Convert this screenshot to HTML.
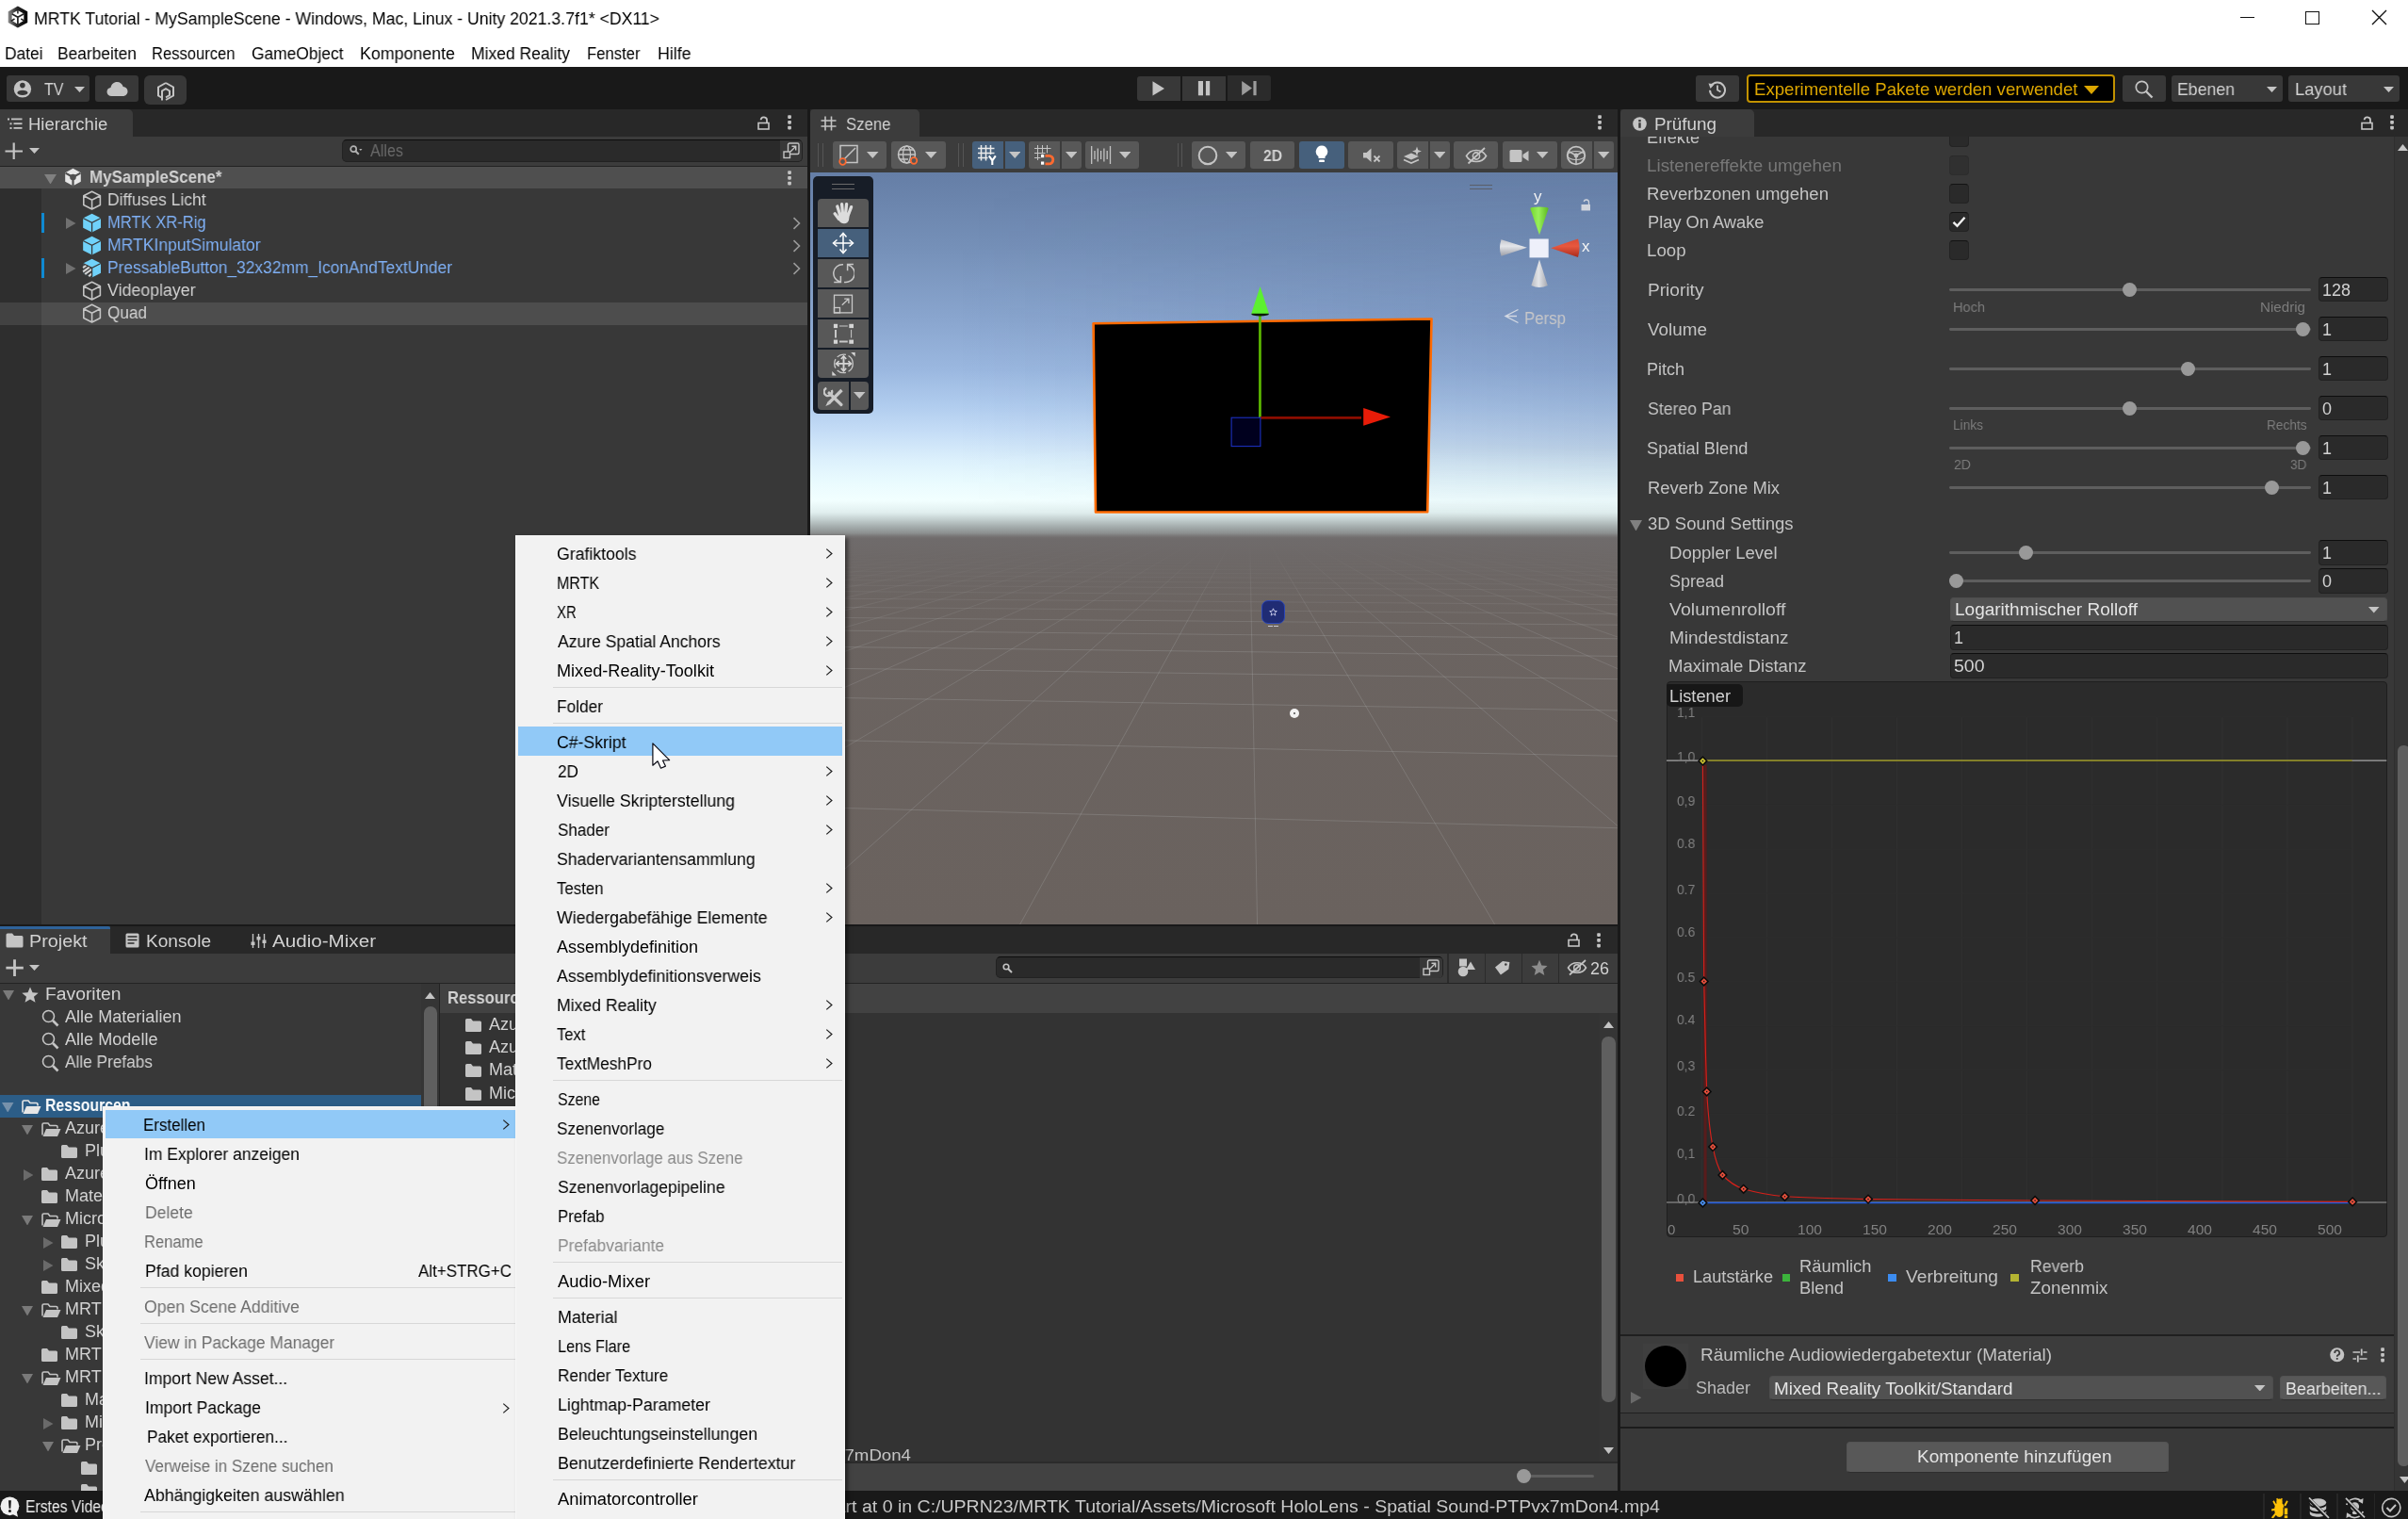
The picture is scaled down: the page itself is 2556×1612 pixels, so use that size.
<!DOCTYPE html>
<html lang="de"><head><meta charset="utf-8"><title>Unity</title><style>
html,body{margin:0;padding:0;}
body{width:2556px;height:1612px;overflow:hidden;background:#191919;position:relative;font-family:"Liberation Sans",sans-serif;}
#root{position:absolute;left:0;top:0;width:2556px;height:1612px;overflow:hidden;}
.b{position:absolute;display:block;}
.t{position:absolute;white-space:nowrap;line-height:1;transform-origin:0 0;will-change:transform;}
</style></head>
<body>
<div class="b" style="left:0px;top:0px;width:2556px;height:70.6px;background:#ffffff;"></div>
<svg class="b" style="left:7px;top:5px;" width="24" height="26" viewBox="0 0 24 26"><defs><linearGradient id="ug" x1="0" y1="0" x2="1" y2="0"><stop offset="0" stop-color="#8a8a8a"/><stop offset="0.45" stop-color="#2a2a2a"/><stop offset="1" stop-color="#000"/></linearGradient></defs><path d="M11.900 1.600 L22.200 7.300 V18.900 L11.900 24.400 L1.700 18.900 V7.300Z" fill="url(#ug)"/><path d="M11.900 6 L18.300 9.600 V16.800 L11.900 20.800 L5.600 16.800 V9.600Z" fill="#fff"/><path d="M11.900 13.300 V21 M11.900 13.300 L5.600 9.700 M11.900 13.300 L18.300 9.700" stroke="#222" stroke-width="1.700" fill="none"/><path d="M11.900 5 V9.500 M4.600 17.300 L8.500 15 M19.200 17.300 L15.300 15" stroke="#222" stroke-width="1.500"/></svg>
<div class="t" style="left:36.0px;top:10px;font-size:18px;line-height:20px;color:#000;transform:scaleX(0.9813);">MRTK Tutorial - MySampleScene - Windows, Mac, Linux - Unity 2021.3.7f1* &lt;DX11&gt;</div>
<div class="b" style="left:2378px;top:18px;width:15px;height:1.4px;background:#111;"></div>
<div class="b" style="left:2446.5px;top:11.5px;width:15px;height:14.5px;background:transparent;border:1.4px solid #111;box-sizing:border-box;"></div>
<svg class="b" style="left:2517px;top:10px;" width="17" height="17" viewBox="0 0 17 17"><path d="M1 1 L16 16 M16 1 L1 16" stroke="#111" stroke-width="1.4"/></svg>
<div class="t" style="left:4.5px;top:47px;font-size:18px;line-height:20px;color:#000;transform:scaleX(0.9638);">Datei</div>
<div class="t" style="left:60.5px;top:47px;font-size:18px;line-height:20px;color:#000;transform:scaleX(0.9648);">Bearbeiten</div>
<div class="t" style="left:160.5px;top:47px;font-size:18px;line-height:20px;color:#000;transform:scaleX(0.9214);">Ressourcen</div>
<div class="t" style="left:266.5px;top:47px;font-size:18px;line-height:20px;color:#000;transform:scaleX(0.9650);">GameObject</div>
<div class="t" style="left:381.5px;top:47px;font-size:18px;line-height:20px;color:#000;transform:scaleX(0.9894);">Komponente</div>
<div class="t" style="left:500.0px;top:47px;font-size:18px;line-height:20px;color:#000;transform:scaleX(0.9719);">Mixed Reality</div>
<div class="t" style="left:622.5px;top:47px;font-size:18px;line-height:20px;color:#000;transform:scaleX(0.9259);">Fenster</div>
<div class="t" style="left:697.5px;top:47px;font-size:18px;line-height:20px;color:#000;transform:scaleX(0.9858);">Hilfe</div>
<div class="b" style="left:0px;top:70.6px;width:2556px;height:44.4px;background:#191919;"></div>
<div class="b" style="left:6.9px;top:80px;width:88.1px;height:28px;background:#383838;border-radius:3px;"></div>
<svg class="b" style="left:14px;top:84.5px;" width="20" height="20" viewBox="0 0 20 20"><circle cx="9.900" cy="9.400" r="9.200" fill="#c4c4c4"/><circle cx="9.900" cy="5.600" r="2.800" fill="#383838"/><ellipse cx="9.900" cy="13.400" rx="5.500" ry="2.700" fill="#383838"/></svg>
<div class="t" style="left:46.5px;top:84px;font-size:19px;line-height:21px;color:#d2d2d2;transform:scaleX(0.8443);">TV</div>
<svg class="b" style="left:79px;top:92px;" width="11" height="6" viewBox="0 0 11 6"><path d="M0 0 H11 L5.5 6Z" fill="#c4c4c4"/></svg>
<div class="b" style="left:101px;top:80px;width:46px;height:28px;background:#383838;border-radius:3px;"></div>
<svg class="b" style="left:113px;top:86px;" width="23" height="17" viewBox="0 0 23 17"><path d="M5.5 16 C2.5 16 0.5 14 0.5 11.5 C0.5 9 2.3 7.3 4.5 7.1 C5 3.5 7.8 1 11.3 1 C14.4 1 16.9 3 17.7 6 C20.5 6.2 22.5 8.3 22.5 11 C22.5 13.800 20.300 16 17.5 16 Z" fill="#c4c4c4"/></svg>
<div class="b" style="left:152.8px;top:80px;width:45.2px;height:31px;background:#383838;border-radius:6px;"></div>
<svg class="b" style="left:165.5px;top:86.5px;" width="20" height="20" viewBox="0 0 20 20"><path d="M10 1 L18 5.5 V14.5 L10 19" fill="none" stroke="#c4c4c4" stroke-width="2"/><path d="M10 1 L2 5.5 V14.5 L5.5 16.5" fill="none" stroke="#c4c4c4" stroke-width="2"/><path d="M6 19.5 V9.5 L10 7.2 L14 9.5 V14 L10 16.3" fill="none" stroke="#c4c4c4" stroke-width="2"/></svg>
<div class="b" style="left:1207px;top:81px;width:46px;height:26px;background:#383838;border-radius:3px 0 0 3px;"></div>
<div class="b" style="left:1254.9px;top:81px;width:46.2px;height:26px;background:#383838;"></div>
<div class="b" style="left:1302.8px;top:80.4px;width:46.6px;height:27.1px;background:#2b2b2b;border-radius:0 3px 3px 0;"></div>
<svg class="b" style="left:1223.3px;top:85.6px;" width="14" height="16" viewBox="0 0 14 16"><path d="M0.5 0.200 L13 7.900 L0.5 15.6Z" fill="#c4c4c4"/></svg>
<svg class="b" style="left:1271px;top:85.9px;" width="14" height="16" viewBox="0 0 14 16"><rect x="0.9" y="0" width="5.1" height="15.3" fill="#c4c4c4"/><rect x="8.9" y="0" width="4.300" height="15.3" fill="#c4c4c4"/></svg>
<svg class="b" style="left:1318px;top:86.4px;" width="17" height="16" viewBox="0 0 17 16"><path d="M0.2 0 L11 7.6 L0.2 15.2Z" fill="#9c9c9c"/><rect x="12.400" y="0" width="3.200" height="15.2" fill="#9c9c9c"/></svg>
<div class="b" style="left:1800px;top:80px;width:46px;height:28px;background:#383838;border-radius:3px;"></div>
<svg class="b" style="left:1813px;top:84.5px;" width="20" height="20" viewBox="0 0 20 20"><path d="M3.3 6.2 A8 8 0 1 1 2 10.800" fill="none" stroke="#c4c4c4" stroke-width="2"/><path d="M0.5 3.5 L6.8 4.2 L2.6 9Z" fill="#c4c4c4"/><path d="M10 5.5 V10.5 L13.5 12.5" fill="none" stroke="#c4c4c4" stroke-width="1.8"/></svg>
<div class="b" style="left:1854.3px;top:79.2px;width:390.3px;height:29.7px;background:#000;border:2px solid #c29200;border-radius:4px;box-sizing:border-box;"></div>
<div class="t" style="left:1862.0px;top:84px;font-size:18.5px;line-height:21px;color:#dca600;transform:scaleX(1.0061);">Experimentelle Pakete werden verwendet</div>
<svg class="b" style="left:2212px;top:91px;" width="16" height="9" viewBox="0 0 16 9"><path d="M0 0 H16 L8 9Z" fill="#dca600"/></svg>
<div class="b" style="left:2253px;top:80px;width:45.6px;height:28px;background:#383838;border-radius:3px;"></div>
<svg class="b" style="left:2266px;top:85px;" width="20" height="20" viewBox="0 0 20 20"><circle cx="7.5" cy="7.5" r="6.2" fill="none" stroke="#c4c4c4" stroke-width="1.700"/><path d="M12 12 L18.5 18.5" stroke="#c4c4c4" stroke-width="2.4"/></svg>
<div class="b" style="left:2305px;top:80px;width:117.7px;height:28px;background:#383838;border-radius:3px;"></div>
<div class="t" style="left:2310.5px;top:84px;font-size:18.5px;line-height:21px;color:#d2d2d2;transform:scaleX(0.9563);">Ebenen</div>
<svg class="b" style="left:2406px;top:92px;" width="11" height="6" viewBox="0 0 11 6"><path d="M0 0 H11 L5.5 6Z" fill="#c4c4c4"/></svg>
<div class="b" style="left:2428.8px;top:80px;width:118.2px;height:28px;background:#383838;border-radius:3px;"></div>
<div class="t" style="left:2435.5px;top:84px;font-size:18.5px;line-height:21px;color:#d2d2d2;transform:scaleX(0.9902);">Layout</div>
<svg class="b" style="left:2530px;top:92px;" width="11" height="6" viewBox="0 0 11 6"><path d="M0 0 H11 L5.5 6Z" fill="#c4c4c4"/></svg>
<div class="b" style="left:0px;top:116px;width:857px;height:865px;background:#383838;"></div>
<div class="b" style="left:0px;top:116px;width:857px;height:29px;background:#282828;"></div>
<div class="b" style="left:0px;top:116px;width:140.5px;height:29px;background:#3c3c3c;border-radius:0 5px 0 0;"></div>
<svg class="b" style="left:7.5px;top:124.5px;" width="16" height="13" viewBox="0 0 16 13"><rect x="0" y="0.5" width="2" height="2" fill="#c4c4c4"/><rect x="4" y="0.500" width="11.5" height="1.800" fill="#c4c4c4"/><rect x="2.5" y="5.300" width="2" height="2" fill="#c4c4c4"/><rect x="6.5" y="5.300" width="9" height="1.800" fill="#c4c4c4"/><rect x="2.5" y="10" width="2" height="2" fill="#c4c4c4"/><rect x="6.5" y="10" width="9" height="1.800" fill="#c4c4c4"/></svg>
<div class="t" style="left:30.0px;top:122px;font-size:18px;line-height:20px;color:#d2d2d2;transform:scaleX(1.0276);">Hierarchie</div>
<svg class="b" style="left:804px;top:122.5px;" width="14" height="15" viewBox="0 0 14 15"><rect x="1" y="7.5" width="11" height="6.5" fill="none" stroke="#c4c4c4" stroke-width="1.600"/><path d="M10 7 V4.800 A3.2 3.2 0 0 0 3.6 4.300" fill="none" stroke="#c4c4c4" stroke-width="1.800"/></svg>
<svg class="b" style="left:835.5px;top:122.1px;" width="4" height="16" viewBox="0 0 4 16"><rect x="0.2" y="0.2" width="3.700" height="3.700" rx="0.800" fill="#c4c4c4"/><rect x="0.2" y="5.95" width="3.700" height="3.700" rx="0.800" fill="#c4c4c4"/><rect x="0.2" y="11.7" width="3.700" height="3.700" rx="0.800" fill="#c4c4c4"/></svg>
<div class="b" style="left:0px;top:145px;width:857px;height:32px;background:#3c3c3c;"></div>
<div class="b" style="left:0px;top:175.8px;width:857px;height:1.1px;background:#232323;"></div>
<svg class="b" style="left:5px;top:150.5px;" width="20" height="19" viewBox="0 0 20 19"><path d="M9.700 0.500 V18 M0.500 9.500 H19" stroke="#c4c4c4" stroke-width="2.200"/></svg>
<svg class="b" style="left:30.6px;top:157px;" width="11" height="6.5" viewBox="0 0 11 6.5"><path d="M0 0 H11 L5.5 6Z" fill="#c4c4c4"/></svg>
<div class="b" style="left:363.2px;top:148.2px;width:488.8px;height:23.4px;background:#2a2a2a;border:1px solid #222;border-top:1.5px solid #0d0d0d;border-radius:5px;box-sizing:border-box;"></div>
<svg class="b" style="left:371px;top:154px;" width="14" height="12" viewBox="0 0 14 12"><circle cx="4.200" cy="4.200" r="3" fill="none" stroke="#b0b0b0" stroke-width="1.700"/><path d="M6.300 6.300 L9.800 9.800" stroke="#b0b0b0" stroke-width="2"/><path d="M10.200 4 H13.500 L11.850 6Z" fill="#b0b0b0"/></svg>
<div class="t" style="left:393.0px;top:150px;font-size:18px;line-height:20px;color:#6a6a6a;transform:scaleX(0.8971);">Alles</div>
<div class="b" style="left:828px;top:149px;width:23px;height:21.5px;background:#383838;border-radius:0 4px 4px 0;"></div>
<svg class="b" style="left:830.5px;top:151px;" width="18" height="18" viewBox="0 0 18 18"><rect x="5.500" y="1" width="11.500" height="11.500" rx="1.500" fill="none" stroke="#c4c4c4" stroke-width="1.400"/><rect x="1" y="10" width="6.500" height="6.500" fill="#383838" stroke="#c4c4c4" stroke-width="1.400"/><path d="M8 10 L13.500 4.500 M9.500 4.300 H13.700 V8.500" fill="none" stroke="#c4c4c4" stroke-width="1.400"/></svg>
<div class="b" style="left:0px;top:177px;width:857px;height:23px;background:#4f4f4f;"></div>
<svg class="b" style="left:47px;top:184.5px;" width="13" height="10.5" viewBox="0 0 13 10.5"><path d="M0 0 H13 L6.5 10.5Z" fill="#808080"/></svg>
<svg class="b" style="left:68px;top:178px;" width="19" height="20" viewBox="0 0 19 20"><path d="M9.500 0.800 L17.800 5.300 V14.700 L9.500 19.200 L1.200 14.700 V5.300Z" fill="#e6e6e6"/><path d="M9.500 10 V19 M9.500 10 L1.500 5.600 M9.500 10 L17.500 5.600" stroke="#4f4f4f" stroke-width="2.200"/><circle cx="9.500" cy="10" r="3.300" fill="#4f4f4f"/></svg>
<div class="t" style="left:94.5px;top:178px;font-size:18px;line-height:20px;color:#d2d2d2;transform:scaleX(0.9425);font-weight:bold;">MySampleScene*</div>
<svg class="b" style="left:836px;top:180.6px;" width="4" height="16" viewBox="0 0 4 16"><rect x="0.2" y="0.2" width="3.700" height="3.700" rx="0.800" fill="#c4c4c4"/><rect x="0.2" y="5.95" width="3.700" height="3.700" rx="0.800" fill="#c4c4c4"/><rect x="0.2" y="11.7" width="3.700" height="3.700" rx="0.800" fill="#c4c4c4"/></svg>
<div class="b" style="left:0px;top:200px;width:43.5px;height:781px;background:#2e2e2e;"></div>
<div class="b" style="left:0px;top:320.5px;width:857px;height:24px;background:#4d4d4d;"></div>
<div class="b" style="left:0px;top:320.5px;width:43.5px;height:24px;background:#424242;"></div>
<svg class="b" style="left:86.9px;top:201.9px;" width="21.2" height="21.2" viewBox="0 0 20 20"><path d="M10 1.2 L18.3 5.400 V14.6 L10 18.8 L1.700 14.6 V5.400 Z M1.700 5.400 L10 9.6 L18.3 5.400 M10 9.6 V18.8" fill="none" stroke="#c4c4c4" stroke-width="1.500" stroke-linejoin="round"/></svg>
<div class="t" style="left:113.6px;top:202px;font-size:18px;line-height:20px;color:#d2d2d2;transform:scaleX(0.9701);">Diffuses Licht</div>
<svg class="b" style="left:86.9px;top:225.9px;" width="21.2" height="21.2" viewBox="0 0 20 20"><path d="M10 0.700 L18.900 5.200 V14.800 L10 19.400 L1.100 14.800 V5.200Z" fill="#70d2fa"/><path d="M1.100 5.200 L10 9.700 L18.900 5.200 M10 9.700 V19.400" fill="none" stroke="#383838" stroke-width="1.200"/></svg>
<div class="t" style="left:113.6px;top:226px;font-size:18px;line-height:20px;color:#7fb0f5;transform:scaleX(0.9192);">MRTK XR-Rig</div>
<svg class="b" style="left:70px;top:230.5px;" width="10.5" height="12" viewBox="0 0 10.5 12"><path d="M0 0 V12 L10.5 6Z" fill="#707070"/></svg>
<div class="b" style="left:44.1px;top:226.2px;width:3px;height:21px;background:#0f8ad2;"></div>
<svg class="b" style="left:840.5px;top:229.5px;" width="9" height="14" viewBox="0 0 9 14"><path d="M1.500 1.200 L7.500 7 L1.500 12.800" fill="none" stroke="#9a9a9a" stroke-width="1.600"/></svg>
<svg class="b" style="left:86.9px;top:249.9px;" width="21.2" height="21.2" viewBox="0 0 20 20"><path d="M10 0.700 L18.900 5.200 V14.800 L10 19.400 L1.100 14.800 V5.200Z" fill="#70d2fa"/><path d="M1.100 5.200 L10 9.700 L18.900 5.200 M10 9.700 V19.400" fill="none" stroke="#383838" stroke-width="1.200"/></svg>
<div class="t" style="left:113.6px;top:250px;font-size:18px;line-height:20px;color:#7fb0f5;transform:scaleX(0.9746);">MRTKInputSimulator</div>
<svg class="b" style="left:840.5px;top:253.5px;" width="9" height="14" viewBox="0 0 9 14"><path d="M1.500 1.200 L7.500 7 L1.500 12.800" fill="none" stroke="#9a9a9a" stroke-width="1.600"/></svg>
<svg class="b" style="left:86.9px;top:273.9px;" width="21.2" height="21.2" viewBox="0 0 20 20"><path d="M10 0.700 L18.900 5.200 V14.800 L10 19.400 L1.100 14.800 V5.200Z" fill="#70d2fa"/><path d="M1.100 5.200 L10 9.700 V19.400 L1.100 14.800Z" fill="#383838"/><path d="M1.100 9.500 L5 6.500 M1.100 13.500 L8.500 8.200 M3 16 L10 11 M6.800 18 L10 15.500" stroke="#d2d2d2" stroke-width="2"/><path d="M1.100 5.200 L10 9.700 L18.900 5.200 M10 9.700 V19.400" fill="none" stroke="#383838" stroke-width="1.200"/><path d="M0 0 H10 V5 L0 0Z" fill="none"/></svg>
<div class="t" style="left:113.6px;top:274px;font-size:18px;line-height:20px;color:#7fb0f5;transform:scaleX(0.9651);">PressableButton_32x32mm_IconAndTextUnder</div>
<svg class="b" style="left:70px;top:278.5px;" width="10.5" height="12" viewBox="0 0 10.5 12"><path d="M0 0 V12 L10.5 6Z" fill="#707070"/></svg>
<div class="b" style="left:44.1px;top:274.2px;width:3px;height:21px;background:#0f8ad2;"></div>
<svg class="b" style="left:840.5px;top:277.5px;" width="9" height="14" viewBox="0 0 9 14"><path d="M1.500 1.200 L7.500 7 L1.500 12.800" fill="none" stroke="#9a9a9a" stroke-width="1.600"/></svg>
<svg class="b" style="left:86.9px;top:297.9px;" width="21.2" height="21.2" viewBox="0 0 20 20"><path d="M10 1.2 L18.3 5.400 V14.6 L10 18.8 L1.700 14.6 V5.400 Z M1.700 5.400 L10 9.6 L18.3 5.400 M10 9.6 V18.8" fill="none" stroke="#c4c4c4" stroke-width="1.500" stroke-linejoin="round"/></svg>
<div class="t" style="left:113.6px;top:298px;font-size:18px;line-height:20px;color:#d2d2d2;transform:scaleX(0.9869);">Videoplayer</div>
<svg class="b" style="left:86.9px;top:321.9px;" width="21.2" height="21.2" viewBox="0 0 20 20"><path d="M10 1.2 L18.3 5.400 V14.6 L10 18.8 L1.700 14.6 V5.400 Z M1.700 5.400 L10 9.6 L18.3 5.400 M10 9.6 V18.8" fill="none" stroke="#c4c4c4" stroke-width="1.500" stroke-linejoin="round"/></svg>
<div class="t" style="left:114.2px;top:322px;font-size:18px;line-height:20px;color:#d2d2d2;transform:scaleX(0.9538);">Quad</div>
<div class="b" style="left:860px;top:116px;width:857px;height:865px;background:#383838;"></div>
<div class="b" style="left:860px;top:116px;width:857px;height:29px;background:#282828;"></div>
<div class="b" style="left:860px;top:116px;width:115.5px;height:29px;background:#3c3c3c;border-radius:4px 5px 0 0;"></div>
<svg class="b" style="left:871px;top:123px;" width="17" height="16" viewBox="0 0 17 16"><path d="M5 0.500 V15.500 M11.500 0.500 V15.500 M0.500 5 H16.500 M0.500 11 H16.500" stroke="#c4c4c4" stroke-width="1.600"/></svg>
<div class="t" style="left:897.5px;top:122px;font-size:18px;line-height:20px;color:#d2d2d2;transform:scaleX(0.9306);">Szene</div>
<svg class="b" style="left:1695.5px;top:122.1px;" width="4" height="16" viewBox="0 0 4 16"><rect x="0.2" y="0.2" width="3.700" height="3.700" rx="0.800" fill="#c4c4c4"/><rect x="0.2" y="5.95" width="3.700" height="3.700" rx="0.800" fill="#c4c4c4"/><rect x="0.2" y="11.7" width="3.700" height="3.700" rx="0.800" fill="#c4c4c4"/></svg>
<div class="b" style="left:860px;top:144.6px;width:857px;height:39.2px;background:#3c3c3c;"></div>
<div class="b" style="left:868px;top:152px;width:1.3px;height:25px;background:#555;"></div>
<div class="b" style="left:872.5px;top:152px;width:1.3px;height:25px;background:#555;"></div>
<div class="b" style="left:1017px;top:152px;width:1.3px;height:25px;background:#555;"></div>
<div class="b" style="left:1021.5px;top:152px;width:1.3px;height:25px;background:#555;"></div>
<div class="b" style="left:1249.5px;top:152px;width:1.3px;height:25px;background:#555;"></div>
<div class="b" style="left:1254px;top:152px;width:1.3px;height:25px;background:#555;"></div>
<div class="b" style="left:884.3px;top:150.1px;width:57.1px;height:28.8px;background:#585858;border-radius:3px;"></div>
<div class="b" style="left:946.4px;top:150.1px;width:57.2px;height:28.8px;background:#585858;border-radius:3px;"></div>
<div class="b" style="left:1032px;top:150.1px;width:32.6px;height:28.8px;background:#46607c;border-radius:3px 0 0 3px;"></div>
<div class="b" style="left:1066.5px;top:150.1px;width:21px;height:28.8px;background:#46607c;border-radius:0 3px 3px 0;"></div>
<div class="b" style="left:1092px;top:150.1px;width:33px;height:28.8px;background:#585858;border-radius:3px 0 0 3px;"></div>
<div class="b" style="left:1127px;top:150.1px;width:20.5px;height:28.8px;background:#585858;border-radius:0 3px 3px 0;"></div>
<div class="b" style="left:1152px;top:150.1px;width:57px;height:28.8px;background:#585858;border-radius:3px;"></div>
<div class="b" style="left:1265.4px;top:150.1px;width:57.1px;height:28.8px;background:#585858;border-radius:3px;"></div>
<div class="b" style="left:1327px;top:150.1px;width:47px;height:28.8px;background:#585858;border-radius:3px;"></div>
<div class="b" style="left:1379px;top:150.1px;width:47.8px;height:28.8px;background:#46607c;border-radius:3px;"></div>
<div class="b" style="left:1431.4px;top:150.1px;width:47.2px;height:28.8px;background:#585858;border-radius:3px;"></div>
<div class="b" style="left:1483px;top:150.1px;width:33px;height:28.8px;background:#585858;border-radius:3px 0 0 3px;"></div>
<div class="b" style="left:1518px;top:150.1px;width:20.6px;height:28.8px;background:#585858;border-radius:0 3px 3px 0;"></div>
<div class="b" style="left:1543px;top:150.1px;width:47px;height:28.8px;background:#585858;border-radius:3px;"></div>
<div class="b" style="left:1595px;top:150.1px;width:58px;height:28.8px;background:#585858;border-radius:3px;"></div>
<div class="b" style="left:1657px;top:150.1px;width:33px;height:28.8px;background:#585858;border-radius:3px 0 0 3px;"></div>
<div class="b" style="left:1692px;top:150.1px;width:21px;height:28.8px;background:#585858;border-radius:0 3px 3px 0;"></div>
<svg class="b" style="left:920.3px;top:161.2px;" width="12.5" height="7" viewBox="0 0 12.5 7"><path d="M0 0 H12.5 L6.25 7Z" fill="#c4c4c4"/></svg>
<svg class="b" style="left:982.3px;top:161.2px;" width="12.5" height="7" viewBox="0 0 12.5 7"><path d="M0 0 H12.5 L6.25 7Z" fill="#c4c4c4"/></svg>
<svg class="b" style="left:1070.8px;top:161.2px;" width="12.5" height="7" viewBox="0 0 12.5 7"><path d="M0 0 H12.5 L6.25 7Z" fill="#c4c4c4"/></svg>
<svg class="b" style="left:1130.8px;top:161.2px;" width="12.5" height="7" viewBox="0 0 12.5 7"><path d="M0 0 H12.5 L6.25 7Z" fill="#c4c4c4"/></svg>
<svg class="b" style="left:1187.8px;top:161.2px;" width="12.5" height="7" viewBox="0 0 12.5 7"><path d="M0 0 H12.5 L6.25 7Z" fill="#c4c4c4"/></svg>
<svg class="b" style="left:1300.8px;top:161.2px;" width="12.5" height="7" viewBox="0 0 12.5 7"><path d="M0 0 H12.5 L6.25 7Z" fill="#c4c4c4"/></svg>
<svg class="b" style="left:1521.8px;top:161.2px;" width="12.5" height="7" viewBox="0 0 12.5 7"><path d="M0 0 H12.5 L6.25 7Z" fill="#c4c4c4"/></svg>
<svg class="b" style="left:1631.3px;top:161.2px;" width="12.5" height="7" viewBox="0 0 12.5 7"><path d="M0 0 H12.5 L6.25 7Z" fill="#c4c4c4"/></svg>
<svg class="b" style="left:1696.3px;top:161.2px;" width="12.5" height="7" viewBox="0 0 12.5 7"><path d="M0 0 H12.5 L6.25 7Z" fill="#c4c4c4"/></svg>
<svg class="b" style="left:890px;top:153px;" width="23" height="23" viewBox="0 0 23 23"><rect x="2" y="1.500" width="18" height="18" fill="none" stroke="#c4c4c4" stroke-width="1.500"/><path d="M5.500 16.500 L18 4" stroke="#c4c4c4" stroke-width="1.500"/><circle cx="4.500" cy="18.500" r="3.300" fill="#585858" stroke="#ff6a30" stroke-width="1.700"/></svg>
<svg class="b" style="left:951.5px;top:153px;" width="24" height="23" viewBox="0 0 24 23"><circle cx="10.500" cy="11" r="9" fill="none" stroke="#c4c4c4" stroke-width="1.500"/><ellipse cx="10.500" cy="11" rx="4" ry="9" fill="none" stroke="#c4c4c4" stroke-width="1.300"/><path d="M1.500 11 H19.500 M3 6 H18 M3 16 H12" stroke="#c4c4c4" stroke-width="1.300"/><circle cx="18" cy="17.500" r="3.300" fill="#585858" stroke="#ff6a30" stroke-width="1.700"/></svg>
<svg class="b" style="left:1037px;top:153px;" width="24" height="23" viewBox="0 0 24 23"><path d="M4.500 1 V17.500 M9.500 1 V17.500 M14.500 1 V11 M1 4.500 H18.500 M1 9.500 H18.500 M1 14.500 H11.500" stroke="#eaeaea" stroke-width="1.500"/><path d="M12.800 12.300 L16.300 17.300 L19.800 12.300 M16.300 17.300 V22" fill="none" stroke="#fff" stroke-width="2.100"/></svg>
<svg class="b" style="left:1097px;top:153px;" width="24" height="23" viewBox="0 0 24 23"><path d="M4.500 1 V17 M9.500 1 V10.500 M14.500 1 V9.500 M1 4.500 H18.500 M1 9.500 H12.500 M1 14.500 H7.500" stroke="#c4c4c4" stroke-width="1"/><rect x="8" y="11" width="3.200" height="3.200" fill="#fff"/><rect x="8" y="18.500" width="3.200" height="3.200" fill="#fff"/><path d="M12.500 12.300 H16.500 A4.300 4.300 0 0 1 16.500 20.900 H12.500" fill="none" stroke="#ff6a30" stroke-width="2.800"/></svg>
<svg class="b" style="left:1157px;top:153.5px;" width="23" height="22" viewBox="0 0 23 22"><path d="M1.700 1 V20 M5 6 V15 M8.300 3.500 V17.500 M11.600 6 V15 M14.900 3.500 V17.500 M18.200 6 V15 M21.500 1 V20" stroke="#c4c4c4" stroke-width="1.300"/></svg>
<svg class="b" style="left:1271px;top:153.5px;" width="23" height="23" viewBox="0 0 23 23"><circle cx="11" cy="11" r="9.300" fill="none" stroke="#c4c4c4" stroke-width="2"/><path d="M4.500 17 A9.300 9.300 0 0 0 18 17 A11 8 0 0 1 4.500 17Z" fill="#c4c4c4"/></svg>
<div class="t" style="left:1341.0px;top:156px;font-size:16.5px;line-height:18px;color:#d2d2d2;transform:scaleX(0.9482);font-weight:bold;">2D</div>
<svg class="b" style="left:1396px;top:154px;" width="14" height="21" viewBox="0 0 14 21"><path d="M7 0.500 A6.500 6.500 0 0 1 10.500 12.300 V14 H3.500 V12.300 A6.500 6.500 0 0 1 7 0.500Z" fill="#fff"/><rect x="4" y="15.500" width="6" height="2.600" rx="1.200" fill="#fff"/></svg>
<svg class="b" style="left:1446px;top:156px;" width="22" height="18" viewBox="0 0 22 18"><path d="M1 6 H4.500 L9.500 1.500 V16 L4.500 11.500 H1Z" fill="#c4c4c4"/><path d="M12.500 9.500 L18.500 15.500 M18.500 9.500 L12.500 15.500" stroke="#c4c4c4" stroke-width="1.800"/></svg>
<svg class="b" style="left:1489px;top:155px;" width="22" height="20" viewBox="0 0 22 20"><path d="M1 11 L9 7.500 L17 11 L9 14.500Z" fill="#c4c4c4"/><path d="M1 14.500 L9 18 L17 14.500" fill="none" stroke="#c4c4c4" stroke-width="1.700"/><path d="M15 0.500 L16.300 4.200 L20 5.500 L16.300 6.800 L15 10.500 L13.700 6.800 L10 5.500 L13.700 4.200Z" fill="#c4c4c4"/></svg>
<svg class="b" style="left:1554.5px;top:155.5px;" width="25" height="19" viewBox="0 0 25 19"><path d="M1.500 9.500 C6 1.500 18 1.500 22.500 9.500 C18 17.500 6 17.500 1.500 9.500Z" fill="none" stroke="#c4c4c4" stroke-width="1.700"/><circle cx="12" cy="9.500" r="3.600" fill="none" stroke="#c4c4c4" stroke-width="1.600"/><path d="M3.500 17.500 L21 1" stroke="#c4c4c4" stroke-width="1.800"/></svg>
<svg class="b" style="left:1602px;top:157.5px;" width="22" height="15" viewBox="0 0 22 15"><rect x="0.500" y="1" width="13" height="13" rx="1.500" fill="#c4c4c4"/><path d="M14.500 6 L20.500 2 V13 L14.500 9Z" fill="#c4c4c4"/></svg>
<svg class="b" style="left:1661.5px;top:153.5px;" width="23" height="23" viewBox="0 0 23 23"><circle cx="11" cy="11" r="9.300" fill="none" stroke="#c4c4c4" stroke-width="1.800"/><circle cx="11" cy="11" r="2.400" fill="#c4c4c4"/><path d="M11 11 V20 M11 11 L3 6.500 M11 11 L19 6.500" stroke="#c4c4c4" stroke-width="1.500"/><ellipse cx="11" cy="11" rx="9.300" ry="4.500" fill="none" stroke="#c4c4c4" stroke-width="1.200"/></svg>
<div class="b" style="left:860px;top:183px;width:857px;height:798px;background:linear-gradient(to bottom,#657ea6 0px,#7590b8 79px,#8aa6cf 158px,#9bb8e0 210px,#b0ccee 247px,#c4dcf6 274px,#dcf0fc 305px,#e8fafe 326px,#f2ffff 348px,#e0eeee 361px,#c0cccc 369px,#a0a8a8 377px,#858686 385px,#706c6c 390px,#6d6867 402px,#6b6461 450px,#6a625e 798px);"></div>
<div class="b" style="left:860px;top:183px;width:857px;height:365px;background:linear-gradient(to right,rgba(40,60,110,0) 18%,rgba(40,60,110,0.17) 100%);-webkit-mask-image:linear-gradient(to bottom,transparent 0,#000 45%,#000 80%,transparent 100%);mask-image:linear-gradient(to bottom,transparent 0,#000 45%,#000 80%,transparent 100%);"></div>
<svg class="b" style="left:860px;top:183px;" width="857" height="798" viewBox="0 0 857 798"><g stroke="#c0c4c6" stroke-width="1"><line x1="-264.7" y1="389.0" x2="-10067.0" y2="818.3" stroke-opacity="0.05"/><line x1="-246.4" y1="389.0" x2="-9803.4" y2="818.3" stroke-opacity="0.05"/><line x1="-228.2" y1="389.0" x2="-9539.9" y2="818.3" stroke-opacity="0.05"/><line x1="-209.9" y1="389.0" x2="-9276.3" y2="818.3" stroke-opacity="0.05"/><line x1="-191.6" y1="389.0" x2="-9012.8" y2="818.3" stroke-opacity="0.05"/><line x1="-173.3" y1="389.0" x2="-8749.2" y2="818.3" stroke-opacity="0.05"/><line x1="-155.0" y1="389.0" x2="-8485.7" y2="818.3" stroke-opacity="0.05"/><line x1="-136.7" y1="389.0" x2="-8222.1" y2="818.3" stroke-opacity="0.05"/><line x1="-118.4" y1="389.0" x2="-7958.6" y2="818.3" stroke-opacity="0.05"/><line x1="-100.2" y1="389.0" x2="-7695.0" y2="818.3" stroke-opacity="0.05"/><line x1="-81.9" y1="389.0" x2="-7431.5" y2="818.3" stroke-opacity="0.05"/><line x1="-63.6" y1="389.0" x2="-7167.9" y2="818.3" stroke-opacity="0.05"/><line x1="-45.3" y1="389.0" x2="-6904.4" y2="818.3" stroke-opacity="0.05"/><line x1="-27.0" y1="389.0" x2="-6640.8" y2="818.3" stroke-opacity="0.05"/><line x1="-8.7" y1="389.0" x2="-6377.3" y2="818.3" stroke-opacity="0.05"/><line x1="9.5" y1="389.0" x2="-6113.7" y2="818.3" stroke-opacity="0.05"/><line x1="27.8" y1="389.0" x2="-5850.2" y2="818.3" stroke-opacity="0.05"/><line x1="46.1" y1="389.0" x2="-5586.6" y2="818.3" stroke-opacity="0.05"/><line x1="64.4" y1="389.0" x2="-5323.1" y2="818.3" stroke-opacity="0.05"/><line x1="82.7" y1="389.0" x2="-5059.5" y2="818.3" stroke-opacity="0.05"/><line x1="101.0" y1="389.0" x2="-4796.0" y2="818.3" stroke-opacity="0.05"/><line x1="119.2" y1="389.0" x2="-4532.4" y2="818.3" stroke-opacity="0.05"/><line x1="137.5" y1="389.0" x2="-4268.9" y2="818.3" stroke-opacity="0.06"/><line x1="155.8" y1="389.0" x2="-4005.3" y2="818.3" stroke-opacity="0.07"/><line x1="174.1" y1="389.0" x2="-3741.8" y2="818.3" stroke-opacity="0.08"/><line x1="192.4" y1="389.0" x2="-3478.2" y2="818.3" stroke-opacity="0.09"/><line x1="210.7" y1="389.0" x2="-3214.7" y2="818.3" stroke-opacity="0.09"/><line x1="228.9" y1="389.0" x2="-2951.1" y2="818.3" stroke-opacity="0.10"/><line x1="247.2" y1="389.0" x2="-2687.6" y2="818.3" stroke-opacity="0.11"/><line x1="265.5" y1="389.0" x2="-2424.0" y2="818.3" stroke-opacity="0.12"/><line x1="283.8" y1="389.0" x2="-2160.5" y2="818.3" stroke-opacity="0.13"/><line x1="302.1" y1="389.0" x2="-1896.9" y2="818.3" stroke-opacity="0.14"/><line x1="320.4" y1="389.0" x2="-1633.4" y2="818.3" stroke-opacity="0.15"/><line x1="338.6" y1="389.0" x2="-1369.8" y2="818.3" stroke-opacity="0.16"/><line x1="356.9" y1="389.0" x2="-1106.3" y2="818.3" stroke-opacity="0.17"/><line x1="375.2" y1="389.0" x2="-842.7" y2="818.3" stroke-opacity="0.17"/><line x1="393.5" y1="389.0" x2="-579.2" y2="818.3" stroke-opacity="0.18"/><line x1="411.8" y1="389.0" x2="-315.6" y2="818.3" stroke-opacity="0.19"/><line x1="430.1" y1="389.0" x2="-52.1" y2="818.3" stroke-opacity="0.20"/><line x1="448.3" y1="389.0" x2="211.5" y2="818.3" stroke-opacity="0.21"/><line x1="466.6" y1="389.0" x2="475.0" y2="818.3" stroke-opacity="0.22"/><line x1="484.9" y1="389.0" x2="738.6" y2="818.3" stroke-opacity="0.21"/><line x1="503.2" y1="389.0" x2="1002.1" y2="818.3" stroke-opacity="0.20"/><line x1="521.5" y1="389.0" x2="1265.7" y2="818.3" stroke-opacity="0.19"/><line x1="539.8" y1="389.0" x2="1529.2" y2="818.3" stroke-opacity="0.18"/><line x1="558.0" y1="389.0" x2="1792.8" y2="818.3" stroke-opacity="0.17"/><line x1="576.3" y1="389.0" x2="2056.3" y2="818.3" stroke-opacity="0.17"/><line x1="594.6" y1="389.0" x2="2319.9" y2="818.3" stroke-opacity="0.16"/><line x1="612.9" y1="389.0" x2="2583.4" y2="818.3" stroke-opacity="0.15"/><line x1="631.2" y1="389.0" x2="2847.0" y2="818.3" stroke-opacity="0.14"/><line x1="649.5" y1="389.0" x2="3110.5" y2="818.3" stroke-opacity="0.13"/><line x1="667.7" y1="389.0" x2="3374.1" y2="818.3" stroke-opacity="0.12"/><line x1="686.0" y1="389.0" x2="3637.6" y2="818.3" stroke-opacity="0.11"/><line x1="704.3" y1="389.0" x2="3901.2" y2="818.3" stroke-opacity="0.10"/><line x1="722.6" y1="389.0" x2="4164.7" y2="818.3" stroke-opacity="0.09"/><line x1="740.9" y1="389.0" x2="4428.3" y2="818.3" stroke-opacity="0.09"/><line x1="759.2" y1="389.0" x2="4691.8" y2="818.3" stroke-opacity="0.08"/><line x1="777.4" y1="389.0" x2="4955.4" y2="818.3" stroke-opacity="0.07"/><line x1="795.7" y1="389.0" x2="5218.9" y2="818.3" stroke-opacity="0.06"/><line x1="814.0" y1="389.0" x2="5482.5" y2="818.3" stroke-opacity="0.05"/><line x1="832.3" y1="389.0" x2="5746.0" y2="818.3" stroke-opacity="0.05"/><line x1="850.6" y1="389.0" x2="6009.6" y2="818.3" stroke-opacity="0.05"/><line x1="868.9" y1="389.0" x2="6273.1" y2="818.3" stroke-opacity="0.05"/><line x1="887.2" y1="389.0" x2="6536.7" y2="818.3" stroke-opacity="0.05"/><line x1="905.4" y1="389.0" x2="6800.2" y2="818.3" stroke-opacity="0.05"/><line x1="923.7" y1="389.0" x2="7063.8" y2="818.3" stroke-opacity="0.05"/><line x1="942.0" y1="389.0" x2="7327.3" y2="818.3" stroke-opacity="0.05"/><line x1="960.3" y1="389.0" x2="7590.9" y2="818.3" stroke-opacity="0.05"/><line x1="978.6" y1="389.0" x2="7854.4" y2="818.3" stroke-opacity="0.05"/><line x1="996.9" y1="389.0" x2="8118.0" y2="818.3" stroke-opacity="0.05"/><line x1="1015.1" y1="389.0" x2="8381.5" y2="818.3" stroke-opacity="0.05"/><line x1="1033.4" y1="389.0" x2="8645.1" y2="818.3" stroke-opacity="0.05"/><line x1="1051.7" y1="389.0" x2="8908.6" y2="818.3" stroke-opacity="0.05"/><line x1="1070.0" y1="389.0" x2="9172.2" y2="818.3" stroke-opacity="0.05"/><line x1="1088.3" y1="389.0" x2="9435.7" y2="818.3" stroke-opacity="0.05"/><line x1="1106.6" y1="389.0" x2="9699.3" y2="818.3" stroke-opacity="0.05"/><line x1="1124.8" y1="389.0" x2="9962.8" y2="818.3" stroke-opacity="0.05"/><line x1="1143.1" y1="389.0" x2="10226.4" y2="818.3" stroke-opacity="0.05"/><line x1="1161.4" y1="389.0" x2="10489.9" y2="818.3" stroke-opacity="0.05"/><line x1="1179.7" y1="389.0" x2="10753.5" y2="818.3" stroke-opacity="0.05"/><line x1="1198.0" y1="389.0" x2="11017.0" y2="818.3" stroke-opacity="0.05"/><line x1="0" y1="803.9" x2="857" y2="835.1" stroke-opacity="0.22"/><line x1="0" y1="673.6" x2="857" y2="695.7" stroke-opacity="0.22"/><line x1="0" y1="602.1" x2="857" y2="619.3" stroke-opacity="0.22"/><line x1="0" y1="557.0" x2="857" y2="571.0" stroke-opacity="0.22"/><line x1="0" y1="525.9" x2="857" y2="537.7" stroke-opacity="0.22"/><line x1="0" y1="503.2" x2="857" y2="513.4" stroke-opacity="0.22"/><line x1="0" y1="485.8" x2="857" y2="494.8" stroke-opacity="0.22"/><line x1="0" y1="472.2" x2="857" y2="480.2" stroke-opacity="0.21"/><line x1="0" y1="461.1" x2="857" y2="468.4" stroke-opacity="0.19"/><line x1="0" y1="452.0" x2="857" y2="458.7" stroke-opacity="0.18"/><line x1="0" y1="444.4" x2="857" y2="450.5" stroke-opacity="0.16"/><line x1="0" y1="437.9" x2="857" y2="443.5" stroke-opacity="0.15"/><line x1="0" y1="432.3" x2="857" y2="437.5" stroke-opacity="0.14"/><line x1="0" y1="427.4" x2="857" y2="432.3" stroke-opacity="0.13"/><line x1="0" y1="423.1" x2="857" y2="427.7" stroke-opacity="0.12"/><line x1="0" y1="419.3" x2="857" y2="423.7" stroke-opacity="0.12"/><line x1="0" y1="415.9" x2="857" y2="420.0" stroke-opacity="0.11"/><line x1="0" y1="412.9" x2="857" y2="416.8" stroke-opacity="0.10"/><line x1="0" y1="410.2" x2="857" y2="413.9" stroke-opacity="0.10"/><line x1="0" y1="407.7" x2="857" y2="411.2" stroke-opacity="0.09"/><line x1="0" y1="405.4" x2="857" y2="408.8" stroke-opacity="0.09"/><line x1="0" y1="403.3" x2="857" y2="406.6" stroke-opacity="0.09"/><line x1="0" y1="401.5" x2="857" y2="404.6" stroke-opacity="0.08"/><line x1="0" y1="399.7" x2="857" y2="402.7" stroke-opacity="0.08"/><line x1="0" y1="398.1" x2="857" y2="401.0" stroke-opacity="0.08"/><line x1="0" y1="396.6" x2="857" y2="399.4" stroke-opacity="0.07"/><line x1="0" y1="395.2" x2="857" y2="397.9" stroke-opacity="0.07"/><line x1="0" y1="393.9" x2="857" y2="396.5" stroke-opacity="0.07"/><line x1="0" y1="392.7" x2="857" y2="395.2" stroke-opacity="0.07"/><line x1="0" y1="391.6" x2="857" y2="394.0" stroke-opacity="0.06"/><line x1="0" y1="390.5" x2="857" y2="392.8" stroke-opacity="0.06"/><line x1="0" y1="389.5" x2="857" y2="391.8" stroke-opacity="0.06"/><line x1="0" y1="388.5" x2="857" y2="390.7" stroke-opacity="0.06"/><line x1="0" y1="387.7" x2="857" y2="389.8" stroke-opacity="0.06"/></g></svg>
<div class="b" style="left:860px;top:566px;width:857px;height:120px;background:linear-gradient(to bottom,rgba(112,108,108,0) 0,rgba(111,107,107,1) 6px,rgba(109,104,103,0.9) 25px,rgba(108,102,100,0.6) 50px,rgba(107,100,97,0.25) 85px,rgba(107,99,95,0) 120px);"></div>
<svg class="b" style="left:1155px;top:296px;" width="375" height="256" viewBox="0 0 375 256"><path d="M5.600 47.200 L364.500 42.500 L360.200 247.300 L8 247.500Z" fill="#000" stroke="#ff6a00" stroke-width="2.600" stroke-linejoin="round"/><path d="M182.450 38 V147" stroke="#5cb800" stroke-width="2.700"/><ellipse cx="182.600" cy="37.200" rx="9.300" ry="2.300" fill="#0c1a08"/><path d="M182.600 7.900 L191.900 36.700 H173.300Z" fill="#5cf030"/><path d="M182.700 147.350 H290" stroke="#8c0d00" stroke-width="2.700"/><path d="M321 146.500 L292.200 137.100 V155.800Z" fill="#e81c08"/><rect x="152.100" y="147.200" width="30.800" height="30.400" fill="#00001e" stroke="#1c30c0" stroke-width="1.100"/></svg>
<div class="b" style="left:1338.5px;top:636.8px;width:25.8px;height:25.7px;background:#202c74;border-radius:7px;border:1px solid #2c48b8;box-sizing:border-box;"></div>
<svg class="b" style="left:1347px;top:645px;" width="9" height="9" viewBox="0 0 9 9"><path d="M4.500 0.800 L5.600 3.400 L8.300 3.600 L6.200 5.400 L6.900 8.100 L4.500 6.600 L2.100 8.100 L2.800 5.400 L0.700 3.600 L3.400 3.400Z" fill="none" stroke="#d0d4f0" stroke-width="0.900"/></svg>
<div class="b" style="left:1345.5px;top:664.3px;width:5px;height:1.2px;background:#c8c8d0;"></div>
<div class="b" style="left:1352px;top:664.3px;width:4.5px;height:1.2px;background:#c8c8d0;"></div>
<div class="b" style="left:1368.6px;top:751.6px;width:10.8px;height:10.8px;background:#f2f2f2;border-radius:50%;"></div>
<div class="b" style="left:1373.3px;top:756.3px;width:1.4px;height:1.4px;background:#777;"></div>
<div class="b" style="left:863.2px;top:187.3px;width:63.6px;height:251.4px;background:#171d27;border-radius:5px;"></div>
<div class="b" style="left:882.9px;top:195.2px;width:24.1px;height:1.2px;background:#6a6a6a;"></div>
<div class="b" style="left:882.9px;top:200.2px;width:24.1px;height:1.2px;background:#6a6a6a;"></div>
<div class="b" style="left:868px;top:211.1px;width:54px;height:29.8px;background:#585858;border-radius:4px 4px 0 0;"></div>
<div class="b" style="left:868px;top:243px;width:54px;height:30px;background:#46607c;border-radius:0;"></div>
<div class="b" style="left:868px;top:275px;width:54px;height:30px;background:#585858;border-radius:0;"></div>
<div class="b" style="left:868px;top:307px;width:54px;height:29.8px;background:#585858;border-radius:0;"></div>
<div class="b" style="left:868px;top:339px;width:54px;height:29.8px;background:#585858;border-radius:0;"></div>
<div class="b" style="left:868px;top:371px;width:54px;height:30px;background:#585858;border-radius:0 0 4px 4px;"></div>
<div class="b" style="left:868px;top:405px;width:33.1px;height:30px;background:#585858;border-radius:4px 0 0 4px;"></div>
<div class="b" style="left:902.9px;top:405px;width:19.1px;height:30px;background:#585858;border-radius:0 4px 4px 0;"></div>
<svg class="b" style="left:906.3px;top:416.2px;" width="12.5" height="7" viewBox="0 0 12.5 7"><path d="M0 0 H12.5 L6.25 7Z" fill="#c4c4c4"/></svg>
<svg class="b" style="left:883.5px;top:213.5px;" width="24" height="24" viewBox="0 0 24 24"><g stroke="#dcdcdc" stroke-width="3.300" stroke-linecap="round" fill="none"><path d="M7.300 13 L4.800 5"/><path d="M10.400 12 L9.600 2.600"/><path d="M13.600 12 L14.600 2.600"/><path d="M16.600 13.500 L19.600 5.600"/><path d="M6.500 18.500 L2.200 12.800"/></g><path d="M5.700 11.500 L18.300 11.500 L17 19.500 Q16 23.200 12 23.200 Q8.500 23.200 6.500 20 Z" fill="#dcdcdc"/></svg>
<svg class="b" style="left:883px;top:246px;" width="24" height="24" viewBox="0 0 24 24"><path d="M12 2 V22 M2 12 H22" stroke="#fff" stroke-width="1.500"/><path d="M8.500 5.500 L12 1.500 L15.500 5.500 M8.500 18.500 L12 22.500 L15.500 18.500 M5.500 8.500 L1.500 12 L5.500 15.500 M18.500 8.500 L22.500 12 L18.500 15.500" fill="none" stroke="#fff" stroke-width="1.500"/></svg>
<svg class="b" style="left:883.5px;top:278px;" width="23" height="24" viewBox="0 0 23 24"><g fill="none" stroke="#c8c8c8" stroke-width="1.500"><path d="M11 2.800 A9.300 9.300 0 0 0 8.400 21.200"/><path d="M12 21.400 A9.300 9.300 0 0 0 15.600 3"/><path d="M1.200 21.600 H8.400 V15.100"/><path d="M21.900 2.500 H15.600 V9.200"/></g></svg>
<svg class="b" style="left:884px;top:310.5px;" width="22" height="23" viewBox="0 0 22 23"><g fill="none" stroke="#c8c8c8" stroke-width="1.300"><rect x="1.500" y="2.200" width="19" height="18.700"/><rect x="1.500" y="15.500" width="6" height="5.400"/><path d="M9.800 12.800 L16.700 6.300 M12.200 6.100 H16.900 V11"/></g></svg>
<svg class="b" style="left:884px;top:342.5px;" width="23" height="23" viewBox="0 0 23 23"><path d="M7 3 H15.800 M19.600 6.900 V15.500" stroke="#c8c8c8" stroke-width="1"/><path d="M3 6.900 V15.500 M7 19.600 H15.800" stroke="#c8c8c8" stroke-width="2"/><rect x="0.900" y="0.800" width="4.200" height="4.300" fill="#d4d4d4"/><rect x="17.300" y="0.800" width="4.700" height="4.300" fill="#d4d4d4"/><rect x="0.900" y="17.600" width="4.200" height="4.200" fill="#d4d4d4"/><rect x="17.300" y="17.600" width="4.700" height="4.200" fill="#d4d4d4"/></svg>
<svg class="b" style="left:882.5px;top:373px;" width="25" height="26" viewBox="0 0 25 26"><circle cx="12.500" cy="12.900" r="9.800" fill="none" stroke="#c8c8c8" stroke-width="1.300" stroke-dasharray="10 2.800"/><path d="M12.500 5 V20.800 M4.600 12.900 H20.400" stroke="#d4d4d4" stroke-width="1.900"/><path d="M9.800 8 L12.500 5 L15.200 8 M9.800 17.800 L12.500 20.800 L15.200 17.800 M7.600 10.200 L4.600 12.900 L7.600 15.600 M17.400 10.200 L20.400 12.900 L17.400 15.600" fill="none" stroke="#d4d4d4" stroke-width="1.700"/><path d="M20.200 1.100 H24.700 V5.600Z M0.300 20.900 V25.400 H4.800Z" fill="#d4d4d4"/></svg>
<svg class="b" style="left:873.5px;top:408.5px;" width="23" height="24" viewBox="0 0 23 24"><path d="M6 8 L19 20.500" stroke="#c8c8c8" stroke-width="3.200" stroke-linecap="round"/><path d="M3.300 2.800 A4.300 4.300 0 1 0 8.800 5" fill="none" stroke="#c8c8c8" stroke-width="2.400"/><path d="M19.500 5 L6 18.500" stroke="#c8c8c8" stroke-width="3.400"/><path d="M4.800 17 L7.600 19.800 L2.300 22Z" fill="#c8c8c8"/></svg>
<div class="b" style="left:1560.3px;top:195.7px;width:23.6px;height:1.2px;background:#5a5e68;"></div>
<div class="b" style="left:1560.3px;top:200.2px;width:23.6px;height:1.2px;background:#5a5e68;"></div>
<svg class="b" style="left:1588px;top:203px;" width="104" height="106" viewBox="0 0 104 106"><defs><linearGradient id="gg" x1="0" y1="0" x2="1" y2="0"><stop offset="0" stop-color="#74d62c"/><stop offset="0.45" stop-color="#98f05a"/><stop offset="1" stop-color="#5cb820"/></linearGradient><linearGradient id="gr" x1="0" y1="0" x2="0" y2="1"><stop offset="0" stop-color="#d84a34"/><stop offset="0.4" stop-color="#e8583e"/><stop offset="1" stop-color="#a82a1c"/></linearGradient><linearGradient id="gl" x1="0" y1="0" x2="0" y2="1"><stop offset="0" stop-color="#c4c6cc"/><stop offset="0.4" stop-color="#e4e6ea"/><stop offset="1" stop-color="#9c9ea6"/></linearGradient><linearGradient id="gb" x1="0" y1="0" x2="1" y2="0"><stop offset="0" stop-color="#b8bac0"/><stop offset="0.45" stop-color="#e2e4e8"/><stop offset="1" stop-color="#a6a8b0"/></linearGradient></defs><path d="M36.300 18.200 Q36.300 16.600 46 16.600 Q55.700 16.600 55.700 18.200 L46 46.300Z" fill="url(#gg)"/><path d="M58.100 60.300 L87 50.400 Q90 60.300 87 70Z" fill="url(#gr)"/><path d="M32.900 59.800 L5.500 51.200 Q2.500 60 5.500 68.800Z" fill="url(#gl)"/><path d="M46 72.600 L37.400 100 Q46 104 54.800 100Z" fill="url(#gb)"/><rect x="35.500" y="50.500" width="20.200" height="19.900" fill="#eef0fa"/></svg>
<div class="t" style="left:1628.3px;top:199px;font-size:17px;line-height:19px;color:#f4f4f4;">y</div>
<div class="t" style="left:1679.3px;top:252px;font-size:17px;line-height:19px;color:#f4f4f4;">x</div>
<svg class="b" style="left:1678px;top:211px;" width="11" height="13" viewBox="0 0 11 13"><rect x="0.500" y="6" width="9.500" height="6.500" fill="#d0d4dc"/><path d="M8.500 6 V3.500 A2.700 2.700 0 0 0 3.200 3" fill="none" stroke="#d0d4dc" stroke-width="1.300"/></svg>
<svg class="b" style="left:1596px;top:327px;" width="18" height="17" viewBox="0 0 18 17"><path d="M15.500 1.500 L2 8.500 L15.500 15.500 M2 8.500 H14" fill="none" stroke="#d3d8e2" stroke-width="1.400"/></svg>
<div class="t" style="left:1617.9px;top:328px;font-size:18px;line-height:20px;color:#cfccc9;transform:scaleX(0.9357);opacity:0.92;">Persp</div>
<div class="b" style="left:1720px;top:116px;width:836px;height:1466px;background:#383838;"></div>
<div class="t" style="left:1748.0px;top:136px;font-size:18px;line-height:20px;color:#c4c4c4;transform:scaleX(1.0053);">Effekte</div>
<div class="b" style="left:2069.2px;top:135px;width:20.6px;height:20.9px;background:#2a2a2a;border:1px solid #232323;border-top-color:#131313;border-radius:4px;box-sizing:border-box;"></div>
<div class="b" style="left:1720px;top:116px;width:836px;height:29px;background:#282828;"></div>
<div class="b" style="left:1720px;top:116px;width:142px;height:29px;background:#3c3c3c;border-radius:4px 5px 0 0;"></div>
<svg class="b" style="left:1732.5px;top:123.5px;" width="15" height="15" viewBox="0 0 15 15"><circle cx="7.500" cy="7.500" r="7.300" fill="#c4c4c4"/><rect x="6.300" y="6.300" width="2.400" height="5.500" fill="#383838"/><rect x="6.300" y="3" width="2.400" height="2.300" fill="#383838"/></svg>
<div class="t" style="left:1756.0px;top:122px;font-size:18px;line-height:20px;color:#d2d2d2;transform:scaleX(1.0468);">Prüfung</div>
<svg class="b" style="left:2506px;top:122.5px;" width="14" height="15" viewBox="0 0 14 15"><rect x="1" y="7.5" width="11" height="6.5" fill="none" stroke="#c4c4c4" stroke-width="1.600"/><path d="M10 7 V4.800 A3.2 3.2 0 0 0 3.6 4.300" fill="none" stroke="#c4c4c4" stroke-width="1.800"/></svg>
<svg class="b" style="left:2537px;top:122.1px;" width="4" height="16" viewBox="0 0 4 16"><rect x="0.2" y="0.2" width="3.700" height="3.700" rx="0.800" fill="#c4c4c4"/><rect x="0.2" y="5.95" width="3.700" height="3.700" rx="0.800" fill="#c4c4c4"/><rect x="0.2" y="11.7" width="3.700" height="3.700" rx="0.800" fill="#c4c4c4"/></svg>
<div class="t" style="left:1748.0px;top:166px;font-size:18px;line-height:20px;color:#777777;transform:scaleX(1.0465);">Listenereffekte umgehen</div>
<div class="b" style="left:2069.2px;top:165px;width:20.6px;height:20.9px;background:#303030;border:1px solid #2d2d2d;border-top-color:#2a2a2a;border-radius:4px;box-sizing:border-box;"></div>
<div class="t" style="left:1748.0px;top:196px;font-size:18px;line-height:20px;color:#c4c4c4;transform:scaleX(1.0313);">Reverbzonen umgehen</div>
<div class="b" style="left:2069.2px;top:195px;width:20.6px;height:20.9px;background:#2a2a2a;border:1px solid #232323;border-top-color:#131313;border-radius:4px;box-sizing:border-box;"></div>
<div class="t" style="left:1749.0px;top:226px;font-size:18px;line-height:20px;color:#c4c4c4;transform:scaleX(1.0145);">Play On Awake</div>
<div class="b" style="left:2069.2px;top:225px;width:20.6px;height:20.9px;background:#2a2a2a;border:1px solid #232323;border-top-color:#131313;border-radius:4px;box-sizing:border-box;"></div><svg class="b" style="left:2072px;top:229.3px;" width="15" height="13" viewBox="0 0 15 13"><path d="M1.500 6.800 L5.500 10.800 L13.500 1.800" fill="none" stroke="#f0f0f0" stroke-width="2.400"/></svg>
<div class="t" style="left:1748.0px;top:256px;font-size:18px;line-height:20px;color:#c4c4c4;transform:scaleX(1.0364);">Loop</div>
<div class="b" style="left:2069.2px;top:255px;width:20.6px;height:20.9px;background:#2a2a2a;border:1px solid #232323;border-top-color:#131313;border-radius:4px;box-sizing:border-box;"></div>
<div class="t" style="left:1749.0px;top:298px;font-size:18px;line-height:20px;color:#c4c4c4;transform:scaleX(1.0624);">Priority</div>
<div class="b" style="left:2069px;top:306.1px;width:384px;height:2.8px;background:#5e5e5e;border-radius:1.400px;"></div><div class="b" style="left:2253.1px;top:300px;width:15px;height:15px;background:#999999;border-radius:50%;"></div>
<div class="b" style="left:2460.5px;top:294px;width:74.1px;height:26.4px;background:#2a2a2a;border:1px solid #212121;border-top-color:#0d0d0d;border-radius:4px;box-sizing:border-box;"></div><div class="t" style="left:2464.5px;top:298px;font-size:18px;line-height:20px;color:#d2d2d2;">128</div>
<div class="t" style="left:1749.0px;top:340px;font-size:18px;line-height:20px;color:#c4c4c4;transform:scaleX(1.0493);">Volume</div>
<div class="b" style="left:2069px;top:347.9px;width:384px;height:2.8px;background:#5e5e5e;border-radius:1.400px;"></div><div class="b" style="left:2436.5px;top:341.8px;width:15px;height:15px;background:#999999;border-radius:50%;"></div>
<div class="b" style="left:2460.5px;top:335.8px;width:74.1px;height:26.4px;background:#2a2a2a;border:1px solid #212121;border-top-color:#0d0d0d;border-radius:4px;box-sizing:border-box;"></div><div class="t" style="left:2464.5px;top:340px;font-size:18px;line-height:20px;color:#d2d2d2;">1</div>
<div class="t" style="left:1748.0px;top:382px;font-size:18px;line-height:20px;color:#c4c4c4;">Pitch</div>
<div class="b" style="left:2069px;top:390.1px;width:384px;height:2.8px;background:#5e5e5e;border-radius:1.400px;"></div><div class="b" style="left:2314.5px;top:384px;width:15px;height:15px;background:#999999;border-radius:50%;"></div>
<div class="b" style="left:2460.5px;top:378px;width:74.1px;height:26.4px;background:#2a2a2a;border:1px solid #212121;border-top-color:#0d0d0d;border-radius:4px;box-sizing:border-box;"></div><div class="t" style="left:2464.5px;top:382px;font-size:18px;line-height:20px;color:#d2d2d2;">1</div>
<div class="t" style="left:1749.0px;top:424px;font-size:18px;line-height:20px;color:#c4c4c4;transform:scaleX(0.9826);">Stereo Pan</div>
<div class="b" style="left:2069px;top:432.1px;width:384px;height:2.8px;background:#5e5e5e;border-radius:1.400px;"></div><div class="b" style="left:2253.1px;top:426px;width:15px;height:15px;background:#999999;border-radius:50%;"></div>
<div class="b" style="left:2460.5px;top:420px;width:74.1px;height:26.4px;background:#2a2a2a;border:1px solid #212121;border-top-color:#0d0d0d;border-radius:4px;box-sizing:border-box;"></div><div class="t" style="left:2464.5px;top:424px;font-size:18px;line-height:20px;color:#d2d2d2;">0</div>
<div class="t" style="left:1748.0px;top:466px;font-size:18px;line-height:20px;color:#c4c4c4;transform:scaleX(1.0134);">Spatial Blend</div>
<div class="b" style="left:2069px;top:474px;width:384px;height:2.8px;background:#5e5e5e;border-radius:1.400px;"></div><div class="b" style="left:2436.5px;top:467.9px;width:15px;height:15px;background:#999999;border-radius:50%;"></div>
<div class="b" style="left:2460.5px;top:461.9px;width:74.1px;height:26.4px;background:#2a2a2a;border:1px solid #212121;border-top-color:#0d0d0d;border-radius:4px;box-sizing:border-box;"></div><div class="t" style="left:2464.5px;top:466px;font-size:18px;line-height:20px;color:#d2d2d2;">1</div>
<div class="t" style="left:1749.0px;top:508px;font-size:18px;line-height:20px;color:#c4c4c4;transform:scaleX(1.0215);">Reverb Zone Mix</div>
<div class="b" style="left:2069px;top:516px;width:384px;height:2.8px;background:#5e5e5e;border-radius:1.400px;"></div><div class="b" style="left:2403.5px;top:509.9px;width:15px;height:15px;background:#999999;border-radius:50%;"></div>
<div class="b" style="left:2460.5px;top:503.9px;width:74.1px;height:26.4px;background:#2a2a2a;border:1px solid #212121;border-top-color:#0d0d0d;border-radius:4px;box-sizing:border-box;"></div><div class="t" style="left:2464.5px;top:508px;font-size:18px;line-height:20px;color:#d2d2d2;">1</div>
<div class="t" style="left:2073.0px;top:317px;font-size:15px;line-height:17px;color:#7c7c7c;transform:scaleX(0.9709);">Hoch</div>
<div class="t" style="left:2398.5px;top:317px;font-size:15px;line-height:17px;color:#7c7c7c;transform:scaleX(1.0101);">Niedrig</div>
<div class="t" style="left:2073.0px;top:442px;font-size:15px;line-height:17px;color:#7c7c7c;transform:scaleX(0.9138);">Links</div>
<div class="t" style="left:2405.8px;top:442px;font-size:15px;line-height:17px;color:#7c7c7c;transform:scaleX(0.9104);">Rechts</div>
<div class="t" style="left:2074.0px;top:484px;font-size:15px;line-height:17px;color:#7c7c7c;transform:scaleX(0.9387);">2D</div>
<div class="t" style="left:2430.5px;top:484px;font-size:15px;line-height:17px;color:#7c7c7c;transform:scaleX(0.9126);">3D</div>
<svg class="b" style="left:1730px;top:551.5px;" width="13" height="11.5" viewBox="0 0 13 11.5"><path d="M0 0 H13 L6.5 11.5Z" fill="#808080"/></svg>
<div class="t" style="left:1749.0px;top:546px;font-size:18px;line-height:20px;color:#c4c4c4;transform:scaleX(1.0293);">3D Sound Settings</div>
<div class="t" style="left:1772.0px;top:577px;font-size:18px;line-height:20px;color:#c4c4c4;transform:scaleX(1.0309);">Doppler Level</div>
<div class="b" style="left:2069px;top:585px;width:384px;height:2.8px;background:#5e5e5e;border-radius:1.400px;"></div><div class="b" style="left:2142.9px;top:578.9px;width:15px;height:15px;background:#999999;border-radius:50%;"></div>
<div class="b" style="left:2460.5px;top:573.3px;width:74.1px;height:26.3px;background:#2a2a2a;border:1px solid #212121;border-top-color:#0d0d0d;border-radius:4px;box-sizing:border-box;"></div><div class="t" style="left:2464.5px;top:577px;font-size:18px;line-height:20px;color:#d2d2d2;">1</div>
<div class="t" style="left:1772.0px;top:607px;font-size:18px;line-height:20px;color:#c4c4c4;">Spread</div>
<div class="b" style="left:2069px;top:614.8px;width:384px;height:2.8px;background:#5e5e5e;border-radius:1.400px;"></div><div class="b" style="left:2069px;top:608.7px;width:15px;height:15px;background:#999999;border-radius:50%;"></div>
<div class="b" style="left:2460.5px;top:603.3px;width:74.1px;height:26.3px;background:#2a2a2a;border:1px solid #212121;border-top-color:#0d0d0d;border-radius:4px;box-sizing:border-box;"></div><div class="t" style="left:2464.5px;top:607px;font-size:18px;line-height:20px;color:#d2d2d2;">0</div>
<div class="t" style="left:1772.0px;top:637px;font-size:18px;line-height:20px;color:#c4c4c4;transform:scaleX(1.0858);">Volumenrolloff</div>
<div class="b" style="left:2069.7px;top:634.2px;width:464.7px;height:25.4px;background:#515151;border:1px solid #4d4d4d;border-bottom-color:#2e2e2e;border-radius:4px;box-sizing:border-box;"></div>
<div class="t" style="left:2075.0px;top:637px;font-size:18px;line-height:20px;color:#e4e4e4;transform:scaleX(1.0557);">Logarithmischer Rolloff</div>
<svg class="b" style="left:2514px;top:644px;" width="11.5" height="6.5" viewBox="0 0 11.5 6.5"><path d="M0 0 H11.500 L5.750 6.500Z" fill="#c4c4c4"/></svg>
<div class="t" style="left:1772.0px;top:667px;font-size:18px;line-height:20px;color:#c4c4c4;transform:scaleX(1.0536);">Mindestdistanz</div>
<div class="b" style="left:2069.6px;top:663.3px;width:465px;height:26.3px;background:#2a2a2a;border:1px solid #212121;border-top-color:#0d0d0d;border-radius:4px;box-sizing:border-box;"></div><div class="t" style="left:2073.5px;top:667px;font-size:18px;line-height:20px;color:#d2d2d2;">1</div>
<div class="t" style="left:1771.0px;top:697px;font-size:18px;line-height:20px;color:#c4c4c4;transform:scaleX(1.0314);">Maximale Distanz</div>
<div class="b" style="left:2069.6px;top:693.3px;width:465px;height:26.3px;background:#2a2a2a;border:1px solid #212121;border-top-color:#0d0d0d;border-radius:4px;box-sizing:border-box;"></div><div class="t" style="left:2074.0px;top:697px;font-size:18px;line-height:20px;color:#d2d2d2;transform:scaleX(1.0821);">500</div>
<div class="b" style="left:1769.3px;top:723.2px;width:764.3px;height:590.1px;background:#2b2b2b;border:1px solid #1e1e1e;border-radius:4px;box-sizing:border-box;"></div>
<svg class="b" style="left:1769.3px;top:723.2px;" width="764.3" height="590.1" viewBox="0 0 764.3 590.1"><line x1="37.3" y1="38" x2="37.3" y2="553" stroke="#313131" stroke-width="1"/><line x1="106.4" y1="38" x2="106.4" y2="553" stroke="#313131" stroke-width="1"/><line x1="175.4" y1="38" x2="175.4" y2="553" stroke="#313131" stroke-width="1"/><line x1="244.5" y1="38" x2="244.5" y2="553" stroke="#313131" stroke-width="1"/><line x1="313.6" y1="38" x2="313.6" y2="553" stroke="#313131" stroke-width="1"/><line x1="382.6" y1="38" x2="382.6" y2="553" stroke="#313131" stroke-width="1"/><line x1="451.7" y1="38" x2="451.7" y2="553" stroke="#313131" stroke-width="1"/><line x1="520.8" y1="38" x2="520.8" y2="553" stroke="#313131" stroke-width="1"/><line x1="589.9" y1="38" x2="589.9" y2="553" stroke="#313131" stroke-width="1"/><line x1="658.9" y1="38" x2="658.9" y2="553" stroke="#313131" stroke-width="1"/><line x1="728.0" y1="38" x2="728.0" y2="553" stroke="#313131" stroke-width="1"/><line x1="797.1" y1="38" x2="797.1" y2="553" stroke="#313131" stroke-width="1"/><line x1="37" y1="37.8" x2="727" y2="37.8" stroke="#2d2d2d" stroke-width="1"/><line x1="37" y1="84.6" x2="727" y2="84.6" stroke="#2d2d2d" stroke-width="1"/><line x1="37" y1="131.5" x2="727" y2="131.5" stroke="#2d2d2d" stroke-width="1"/><line x1="37" y1="178.3" x2="727" y2="178.3" stroke="#2d2d2d" stroke-width="1"/><line x1="37" y1="225.2" x2="727" y2="225.2" stroke="#2d2d2d" stroke-width="1"/><line x1="37" y1="272.0" x2="727" y2="272.0" stroke="#2d2d2d" stroke-width="1"/><line x1="37" y1="318.9" x2="727" y2="318.9" stroke="#2d2d2d" stroke-width="1"/><line x1="37" y1="365.7" x2="727" y2="365.7" stroke="#2d2d2d" stroke-width="1"/><line x1="37" y1="412.6" x2="727" y2="412.6" stroke="#2d2d2d" stroke-width="1"/><line x1="37" y1="459.4" x2="727" y2="459.4" stroke="#2d2d2d" stroke-width="1"/><line x1="37" y1="506.3" x2="727" y2="506.3" stroke="#2d2d2d" stroke-width="1"/><line x1="37" y1="553.1" x2="727" y2="553.1" stroke="#2d2d2d" stroke-width="1"/><line x1="0" y1="84.1" x2="764.3" y2="84.1" stroke="#a8a8a8" stroke-width="1.100"/><line x1="0" y1="553.0" x2="764.3" y2="553.0" stroke="#a0a0a0" stroke-width="1.100"/><line x1="38.4" y1="84.1" x2="727.7" y2="84.1" stroke="#8c8600" stroke-width="1.300"/><line x1="38.4" y1="553.6" x2="727.7" y2="553.6" stroke="#1e5ae0" stroke-width="1.500"/><path d="M39.5 88.8 L42.6 88.8 L42.6 552.8 L39.5 552.8Z" fill="#581c1c"/><path d="M38.4 84.6 L39.7 318.5 L41.5 396.8 C42.0 416.8 42.4 426.8 42.7 435.5 C44.2 461.8 46.2 479.8 49.1 494.1 C51.7 507.8 54.7 516.8 59.4 524.0 C65.7 530.8 72.7 535.8 81.7 538.8 C95.7 542.8 108.7 545.3 125.5 546.8 C155.7 548.3 180.7 549.1 214.0 549.6 C270.7 550.3 330.7 550.8 391.1 551.0 L728.1 552.4" fill="none" stroke="#d6201a" stroke-width="1.150"/><path d="M39.7 313.1 l5.400 5.400 l-5.400 5.400 l-5.400 -5.400Z" fill="#0a0a0a"/><path d="M39.7 315.2 l3.300 3.300 l-3.300 3.300 l-3.300 -3.300Z" fill="#e8503c"/><rect x="39.0" y="317.8" width="1.400" height="1.400" fill="#1a1a1a"/><path d="M42.7 430.1 l5.400 5.400 l-5.400 5.400 l-5.400 -5.400Z" fill="#0a0a0a"/><path d="M42.7 432.2 l3.300 3.300 l-3.300 3.300 l-3.300 -3.300Z" fill="#e8503c"/><rect x="42.0" y="434.8" width="1.400" height="1.400" fill="#1a1a1a"/><path d="M49.1 488.7 l5.400 5.400 l-5.400 5.400 l-5.400 -5.400Z" fill="#0a0a0a"/><path d="M49.1 490.8 l3.300 3.300 l-3.300 3.300 l-3.300 -3.300Z" fill="#e8503c"/><rect x="48.4" y="493.4" width="1.400" height="1.400" fill="#1a1a1a"/><path d="M59.4 518.6 l5.400 5.400 l-5.400 5.400 l-5.400 -5.400Z" fill="#0a0a0a"/><path d="M59.4 520.7 l3.300 3.300 l-3.300 3.300 l-3.300 -3.300Z" fill="#e8503c"/><rect x="58.7" y="523.3" width="1.400" height="1.400" fill="#1a1a1a"/><path d="M81.7 533.4 l5.400 5.400 l-5.400 5.400 l-5.400 -5.400Z" fill="#0a0a0a"/><path d="M81.7 535.5 l3.300 3.300 l-3.300 3.300 l-3.300 -3.300Z" fill="#e8503c"/><rect x="81.0" y="538.1" width="1.400" height="1.400" fill="#1a1a1a"/><path d="M125.5 541.4 l5.400 5.400 l-5.400 5.400 l-5.400 -5.400Z" fill="#0a0a0a"/><path d="M125.5 543.5 l3.300 3.300 l-3.300 3.300 l-3.300 -3.300Z" fill="#e8503c"/><rect x="124.8" y="546.1" width="1.400" height="1.400" fill="#1a1a1a"/><path d="M214.0 544.2 l5.400 5.400 l-5.400 5.400 l-5.400 -5.400Z" fill="#0a0a0a"/><path d="M214.0 546.3 l3.300 3.300 l-3.300 3.300 l-3.300 -3.300Z" fill="#e8503c"/><rect x="213.3" y="548.9" width="1.400" height="1.400" fill="#1a1a1a"/><path d="M391.1 545.6 l5.400 5.400 l-5.400 5.400 l-5.400 -5.400Z" fill="#0a0a0a"/><path d="M391.1 547.7 l3.300 3.300 l-3.300 3.300 l-3.300 -3.300Z" fill="#e8503c"/><rect x="390.4" y="550.3" width="1.400" height="1.400" fill="#1a1a1a"/><path d="M728.1 547.0 l5.400 5.400 l-5.400 5.400 l-5.400 -5.400Z" fill="#0a0a0a"/><path d="M728.1 549.1 l3.300 3.300 l-3.300 3.300 l-3.300 -3.300Z" fill="#e8503c"/><rect x="727.4" y="551.7" width="1.400" height="1.400" fill="#1a1a1a"/><path d="M38.4 79.2 l5.400 5.400 l-5.400 5.400 l-5.400 -5.400Z" fill="#0a0a0a"/><path d="M38.4 81.3 l3.300 3.300 l-3.300 3.300 l-3.300 -3.300Z" fill="#c8c030"/><rect x="37.7" y="83.9" width="1.400" height="1.400" fill="#1a1a1a"/><path d="M38.4 548.1 l5.400 5.400 l-5.400 5.400 l-5.400 -5.400Z" fill="#0a0a0a"/><path d="M38.4 550.2 l3.300 3.300 l-3.300 3.300 l-3.300 -3.300Z" fill="#4a90f0"/><rect x="37.7" y="552.8" width="1.400" height="1.400" fill="#1a1a1a"/></svg>
<div class="b" style="left:1769.3px;top:726px;width:80.7px;height:24px;background:#171717;border-radius:2px 5px 5px 5px;"></div>
<div class="t" style="left:1772.0px;top:729px;font-size:18px;line-height:20px;color:#d2d2d2;transform:scaleX(1.0150);">Listener</div>
<div class="t" style="left:1780.0px;top:747px;font-size:15px;line-height:17px;color:#808080;transform:scaleX(0.9256);">1,1</div>
<div class="t" style="left:1780.0px;top:794px;font-size:15px;line-height:17px;color:#808080;transform:scaleX(0.9256);">1,0</div>
<div class="t" style="left:1780.0px;top:841px;font-size:15px;line-height:17px;color:#808080;transform:scaleX(0.9256);">0,9</div>
<div class="t" style="left:1780.0px;top:886px;font-size:15px;line-height:17px;color:#808080;transform:scaleX(0.9256);">0.8</div>
<div class="t" style="left:1780.0px;top:935px;font-size:15px;line-height:17px;color:#808080;transform:scaleX(0.9256);">0.7</div>
<div class="t" style="left:1780.0px;top:980px;font-size:15px;line-height:17px;color:#808080;transform:scaleX(0.9256);">0.6</div>
<div class="t" style="left:1780.0px;top:1028px;font-size:15px;line-height:17px;color:#808080;transform:scaleX(0.9256);">0.5</div>
<div class="t" style="left:1780.0px;top:1073px;font-size:15px;line-height:17px;color:#808080;transform:scaleX(0.9256);">0.4</div>
<div class="t" style="left:1780.0px;top:1122px;font-size:15px;line-height:17px;color:#808080;transform:scaleX(0.9256);">0,3</div>
<div class="t" style="left:1780.0px;top:1170px;font-size:15px;line-height:17px;color:#808080;transform:scaleX(0.9256);">0.2</div>
<div class="t" style="left:1780.0px;top:1215px;font-size:15px;line-height:17px;color:#808080;transform:scaleX(0.9256);">0,1</div>
<div class="t" style="left:1780.0px;top:1263px;font-size:15px;line-height:17px;color:#808080;transform:scaleX(0.9256);">0,0</div>
<div class="t" style="left:1769.7px;top:1296px;font-size:15px;line-height:17px;color:#808080;">0</div>
<div class="t" style="left:1838.8px;top:1296px;font-size:15px;line-height:17px;color:#808080;transform:scaleX(1.0488);">50</div>
<div class="t" style="left:1907.8px;top:1296px;font-size:15px;line-height:17px;color:#808080;transform:scaleX(1.0388);">100</div>
<div class="t" style="left:1976.9px;top:1296px;font-size:15px;line-height:17px;color:#808080;transform:scaleX(1.0388);">150</div>
<div class="t" style="left:2046.0px;top:1296px;font-size:15px;line-height:17px;color:#808080;transform:scaleX(1.0388);">200</div>
<div class="t" style="left:2115.1px;top:1296px;font-size:15px;line-height:17px;color:#808080;transform:scaleX(1.0388);">250</div>
<div class="t" style="left:2184.1px;top:1296px;font-size:15px;line-height:17px;color:#808080;transform:scaleX(1.0388);">300</div>
<div class="t" style="left:2253.2px;top:1296px;font-size:15px;line-height:17px;color:#808080;transform:scaleX(1.0388);">350</div>
<div class="t" style="left:2322.3px;top:1296px;font-size:15px;line-height:17px;color:#808080;transform:scaleX(1.0388);">400</div>
<div class="t" style="left:2391.3px;top:1296px;font-size:15px;line-height:17px;color:#808080;transform:scaleX(1.0388);">450</div>
<div class="t" style="left:2460.4px;top:1296px;font-size:15px;line-height:17px;color:#808080;transform:scaleX(1.0388);">500</div>
<div class="b" style="left:1779px;top:1351.7px;width:8.3px;height:8.3px;background:#e8503c;"></div>
<div class="b" style="left:1892px;top:1351.7px;width:8.3px;height:8.3px;background:#3cb43c;"></div>
<div class="b" style="left:2004.3px;top:1351.7px;width:8.3px;height:8.3px;background:#3c8cf0;"></div>
<div class="b" style="left:2134.4px;top:1351.7px;width:8.3px;height:8.3px;background:#b4b432;"></div>
<div class="t" style="left:1797.0px;top:1345px;font-size:18px;line-height:20px;color:#c4c4c4;transform:scaleX(1.0113);">Lautstärke</div>
<div class="t" style="left:1909.7px;top:1334px;font-size:18px;line-height:20px;color:#c4c4c4;transform:scaleX(1.0196);">Räumlich</div>
<div class="t" style="left:1909.7px;top:1357px;font-size:18px;line-height:20px;color:#c4c4c4;transform:scaleX(1.0209);">Blend</div>
<div class="t" style="left:2022.8px;top:1345px;font-size:18px;line-height:20px;color:#c4c4c4;transform:scaleX(1.0644);">Verbreitung</div>
<div class="t" style="left:2155.0px;top:1334px;font-size:18px;line-height:20px;color:#c4c4c4;transform:scaleX(0.9823);">Reverb</div>
<div class="t" style="left:2155.0px;top:1357px;font-size:18px;line-height:20px;color:#c4c4c4;transform:scaleX(1.0439);">Zonenmix</div>
<div class="b" style="left:1720px;top:1416px;width:821px;height:2px;background:#1f1f1f;"></div>
<div class="b" style="left:1720px;top:1418px;width:821px;height:81px;background:#3c3c3c;"></div>
<div class="b" style="left:1744.3px;top:1426.2px;width:47.7px;height:47.6px;background:#3f3f3f;"></div>
<div class="b" style="left:1745.9px;top:1427.8px;width:44px;height:44px;background:#000;border-radius:50%;"></div>
<div class="t" style="left:1805.0px;top:1428px;font-size:18px;line-height:20px;color:#c4c4c4;transform:scaleX(1.0531);">Räumliche Audiowiedergabetextur (Material)</div>
<svg class="b" style="left:2473px;top:1430px;" width="15.5" height="15.5" viewBox="0 0 15.5 15.5"><circle cx="7.750" cy="7.750" r="7.500" fill="#c4c4c4"/><path d="M5.300 6 A2.500 2.500 0 1 1 8.700 8 Q7.750 8.500 7.750 9.800" fill="none" stroke="#3c3c3c" stroke-width="1.800"/><rect x="6.850" y="11" width="1.800" height="1.800" fill="#3c3c3c"/></svg>
<svg class="b" style="left:2497px;top:1430.5px;" width="16" height="15" viewBox="0 0 16 15"><path d="M0.500 4 H8 M11.500 4 H15.500 M0.500 11 H4 M7.500 11 H15.500" stroke="#c4c4c4" stroke-width="1.600"/><path d="M9.700 0.500 V7.500 M5.800 7.500 V14.500" stroke="#c4c4c4" stroke-width="1.800"/></svg>
<svg class="b" style="left:2527px;top:1429.6px;" width="4" height="16" viewBox="0 0 4 16"><rect x="0.2" y="0.2" width="3.700" height="3.700" rx="0.800" fill="#c4c4c4"/><rect x="0.2" y="5.95" width="3.700" height="3.700" rx="0.800" fill="#c4c4c4"/><rect x="0.2" y="11.7" width="3.700" height="3.700" rx="0.800" fill="#c4c4c4"/></svg>
<svg class="b" style="left:1730.5px;top:1477px;" width="11.5" height="12.5" viewBox="0 0 11.5 12.5"><path d="M0 0 V12.5 L11.5 6.25Z" fill="#6a6a6a"/></svg>
<div class="t" style="left:1800.3px;top:1463px;font-size:18px;line-height:20px;color:#bababa;transform:scaleX(0.9940);">Shader</div>
<div class="b" style="left:1877.6px;top:1460px;width:535.2px;height:25.7px;background:#515151;border:1px solid #4d4d4d;border-bottom-color:#2e2e2e;border-radius:4px;box-sizing:border-box;"></div>
<div class="t" style="left:1883.0px;top:1464px;font-size:18px;line-height:20px;color:#e4e4e4;transform:scaleX(1.0484);">Mixed Reality Toolkit/Standard</div>
<svg class="b" style="left:2393px;top:1469.5px;" width="11.5" height="6.5" viewBox="0 0 11.5 6.5"><path d="M0 0 H11.500 L5.750 6.500Z" fill="#c4c4c4"/></svg>
<div class="b" style="left:2420px;top:1460px;width:113.2px;height:25.7px;background:#585858;border:1px solid #545454;border-bottom-color:#2e2e2e;border-radius:4px;box-sizing:border-box;"></div>
<div class="t" style="left:2426.0px;top:1464px;font-size:18px;line-height:20px;color:#e4e4e4;transform:scaleX(0.9944);">Bearbeiten...</div>
<div class="b" style="left:1720px;top:1499px;width:821px;height:1.4px;background:#1f1f1f;"></div>
<div class="b" style="left:1720px;top:1513.6px;width:821px;height:2.3px;background:#1c1c1c;"></div>
<div class="b" style="left:1959.8px;top:1529.6px;width:342px;height:33.6px;background:#585858;border:1px solid #545454;border-bottom-color:#2e2e2e;border-radius:4px;box-sizing:border-box;"></div>
<div class="t" style="left:2035.0px;top:1536px;font-size:18px;line-height:20px;color:#e4e4e4;transform:scaleX(1.0581);">Komponente hinzufügen</div>
<div class="b" style="left:2541px;top:145px;width:15px;height:1437px;background:#353535;"></div>
<div class="b" style="left:2541px;top:145px;width:1px;height:1437px;background:#2e2e2e;"></div>
<svg class="b" style="left:2545px;top:153px;" width="11" height="7" viewBox="0 0 11 7"><path d="M0 7 H11 L5.500 0Z" fill="#c4c4c4"/></svg>
<svg class="b" style="left:2546.5px;top:1566.5px;" width="11" height="7" viewBox="0 0 11 7"><path d="M0 0 H11 L5.500 7Z" fill="#c4c4c4"/></svg>
<div class="b" style="left:2545px;top:791px;width:13px;height:765px;background:#5f5f5f;border-radius:6px;"></div>
<div class="b" style="left:0px;top:981px;width:1717px;height:2px;background:#191919;"></div>
<div class="b" style="left:0px;top:983px;width:1717px;height:599px;background:#383838;"></div>
<div class="b" style="left:0px;top:983px;width:1717px;height:29px;background:#282828;"></div>
<div class="b" style="left:0px;top:983px;width:117px;height:29px;background:#3c3c3c;"></div>
<div class="b" style="left:0px;top:982.7px;width:116.7px;height:3.4px;background:#2e639a;border-radius:0 2px 0 0;"></div>
<svg class="b" style="left:6px;top:990px;" width="19" height="16" viewBox="0 0 19 16"><path d="M0.500 2 Q0.500 0.500 2 0.500 H7 L9 3 H17 Q18.500 3 18.500 4.500 V14 Q18.500 15.500 17 15.500 H2 Q0.500 15.500 0.500 14Z" fill="#c4c4c4"/></svg>
<div class="t" style="left:31.0px;top:989px;font-size:18px;line-height:20px;color:#d2d2d2;transform:scaleX(1.0978);">Projekt</div>
<svg class="b" style="left:132.5px;top:990px;" width="16" height="16" viewBox="0 0 16 16"><rect x="0.500" y="0.500" width="14" height="15" rx="1.500" fill="#c4c4c4"/><path d="M2.500 4 H12.500 M2.500 7.500 H12.500 M2.500 11 H9.500" stroke="#282828" stroke-width="1.600"/></svg>
<div class="t" style="left:155.0px;top:989px;font-size:18px;line-height:20px;color:#d2d2d2;transform:scaleX(1.0607);">Konsole</div>
<svg class="b" style="left:266px;top:990.5px;" width="17" height="15" viewBox="0 0 17 15"><path d="M2.500 0 V15 M8.500 0 V15 M14.500 0 V15" stroke="#c4c4c4" stroke-width="1.400"/><rect x="0.500" y="8.500" width="4" height="3.500" fill="#c4c4c4"/><rect x="6.500" y="3" width="4" height="3.500" fill="#c4c4c4"/><rect x="12.500" y="6.500" width="4" height="3.500" fill="#c4c4c4"/></svg>
<div class="t" style="left:289.0px;top:989px;font-size:18px;line-height:20px;color:#d2d2d2;transform:scaleX(1.1454);">Audio-Mixer</div>
<svg class="b" style="left:1664px;top:990px;" width="14" height="15" viewBox="0 0 14 15"><rect x="1" y="7.5" width="11" height="6.5" fill="none" stroke="#c4c4c4" stroke-width="1.600"/><path d="M10 7 V4.800 A3.2 3.2 0 0 0 3.6 4.300" fill="none" stroke="#c4c4c4" stroke-width="1.800"/></svg>
<svg class="b" style="left:1695px;top:989.6px;" width="4" height="16" viewBox="0 0 4 16"><rect x="0.2" y="0.2" width="3.700" height="3.700" rx="0.800" fill="#c4c4c4"/><rect x="0.2" y="5.95" width="3.700" height="3.700" rx="0.800" fill="#c4c4c4"/><rect x="0.2" y="11.7" width="3.700" height="3.700" rx="0.800" fill="#c4c4c4"/></svg>
<div class="b" style="left:0px;top:1012px;width:1717px;height:31.5px;background:#3c3c3c;"></div>
<div class="b" style="left:0px;top:1042.5px;width:1717px;height:1px;background:#232323;"></div>
<svg class="b" style="left:5.5px;top:1018px;" width="20" height="19" viewBox="0 0 20 19"><path d="M9.500 0.300 V18 M0.400 9.100 H18.800" stroke="#c4c4c4" stroke-width="2.800"/></svg>
<svg class="b" style="left:30.5px;top:1024px;" width="11" height="6" viewBox="0 0 11 6"><path d="M0 0 H11 L5.5 6Z" fill="#c4c4c4"/></svg>
<div class="b" style="left:1056.5px;top:1015.2px;width:475.5px;height:23.2px;background:#2a2a2a;border:1px solid #222;border-top:1.5px solid #0d0d0d;border-radius:5px;box-sizing:border-box;"></div>
<svg class="b" style="left:1064px;top:1022px;" width="11" height="11" viewBox="0 0 11 11"><circle cx="4" cy="4" r="2.800" fill="none" stroke="#c4c4c4" stroke-width="1.600"/><path d="M6 6 L10 10" stroke="#c4c4c4" stroke-width="2"/></svg>
<div class="b" style="left:1507px;top:1016px;width:24px;height:21.5px;background:#383838;border-radius:0 4px 4px 0;"></div>
<svg class="b" style="left:1509.5px;top:1018px;" width="18" height="18" viewBox="0 0 18 18"><rect x="5.500" y="1" width="11.500" height="11.500" rx="1.500" fill="none" stroke="#c4c4c4" stroke-width="1.400"/><rect x="1" y="10" width="6.500" height="6.500" fill="#383838" stroke="#c4c4c4" stroke-width="1.400"/><path d="M8 10 L13.500 4.500 M9.500 4.300 H13.700 V8.500" fill="none" stroke="#c4c4c4" stroke-width="1.400"/></svg>
<div class="b" style="left:1536.2px;top:1012px;width:1.6px;height:30.5px;background:#2b2b2b;"></div>
<div class="b" style="left:1575.7px;top:1012px;width:1.6px;height:30.5px;background:#2b2b2b;"></div>
<div class="b" style="left:1614.7px;top:1012px;width:1.6px;height:30.5px;background:#2b2b2b;"></div>
<div class="b" style="left:1653.7px;top:1012px;width:1.6px;height:30.5px;background:#2b2b2b;"></div>
<svg class="b" style="left:1546.5px;top:1016.5px;" width="20" height="20" viewBox="0 0 20 20"><rect x="2" y="0.500" width="8" height="8" fill="#c4c4c4"/><path d="M14 3.500 L19 12 H9Z" fill="#c4c4c4"/><circle cx="6" cy="14" r="5.300" fill="#c4c4c4"/></svg>
<svg class="b" style="left:1585.5px;top:1018.5px;" width="17" height="16" viewBox="0 0 17 16"><path d="M8 1 L15.500 1 V8.500 L8 15.500 L1 8.500Z" fill="#c4c4c4" transform="rotate(8 8 8)"/><circle cx="12.300" cy="4.500" r="1.300" fill="#3c3c3c"/></svg>
<svg class="b" style="left:1625px;top:1017.5px;" width="18" height="18" viewBox="0 0 18 18"><path d="M9 0.800 L11.400 6.500 L17.500 7 L12.900 11 L14.300 17 L9 13.800 L3.700 17 L5.100 11 L0.500 7 L6.600 6.500Z" fill="#8c8c8c"/></svg>
<svg class="b" style="left:1663px;top:1018px;" width="23" height="18" viewBox="0 0 23 18"><path d="M1.500 9 C5.500 2 16.500 2 20.500 9 C16.500 16 5.500 16 1.500 9Z" fill="none" stroke="#c4c4c4" stroke-width="1.600"/><circle cx="11" cy="9" r="3.300" fill="none" stroke="#c4c4c4" stroke-width="1.500"/><path d="M3 16.500 L20 1" stroke="#c4c4c4" stroke-width="1.700"/></svg>
<div class="t" style="left:1688.0px;top:1018px;font-size:18px;line-height:20px;color:#d2d2d2;">26</div>
<div class="b" style="left:0px;top:1162px;width:447px;height:24px;background:#2c5d87;"></div>
<svg class="b" style="left:2.7px;top:1050.5px;" width="12" height="10.5" viewBox="0 0 12 10.5"><path d="M0 0 H12 L6 10.5Z" fill="#7a7a7a"/></svg>
<svg class="b" style="left:23px;top:1046.5px;" width="18" height="17" viewBox="0 0 18 17"><path d="M9 0.500 L11.500 6.200 L17.700 6.700 L13 10.800 L14.500 16.800 L9 13.500 L3.500 16.800 L5 10.800 L0.300 6.700 L6.500 6.200Z" fill="#c4c4c4"/></svg>
<div class="t" style="left:48.0px;top:1045px;font-size:18px;line-height:20px;color:#d2d2d2;transform:scaleX(1.0728);">Favoriten</div>
<svg class="b" style="left:43.5px;top:1070.5px;" width="19" height="19" viewBox="0 0 19 19"><circle cx="7.500" cy="7.500" r="6" fill="none" stroke="#c4c4c4" stroke-width="1.600"/><path d="M12 12 L17.500 17.500" stroke="#c4c4c4" stroke-width="2.600"/></svg>
<div class="t" style="left:68.6px;top:1069px;font-size:18px;line-height:20px;color:#d2d2d2;transform:scaleX(1.0036);">Alle Materialien</div>
<svg class="b" style="left:43.5px;top:1094.5px;" width="19" height="19" viewBox="0 0 19 19"><circle cx="7.500" cy="7.500" r="6" fill="none" stroke="#c4c4c4" stroke-width="1.600"/><path d="M12 12 L17.500 17.500" stroke="#c4c4c4" stroke-width="2.600"/></svg>
<div class="t" style="left:68.6px;top:1093px;font-size:18px;line-height:20px;color:#d2d2d2;transform:scaleX(1.0045);">Alle Modelle</div>
<svg class="b" style="left:43.5px;top:1118.5px;" width="19" height="19" viewBox="0 0 19 19"><circle cx="7.500" cy="7.500" r="6" fill="none" stroke="#c4c4c4" stroke-width="1.600"/><path d="M12 12 L17.500 17.500" stroke="#c4c4c4" stroke-width="2.600"/></svg>
<div class="t" style="left:68.6px;top:1117px;font-size:18px;line-height:20px;color:#d2d2d2;transform:scaleX(0.9582);">Alle Prefabs</div>
<svg class="b" style="left:2.3px;top:1169.6px;" width="12.5" height="10.6" viewBox="0 0 12.5 10.6"><path d="M0 0 H12.5 L6.25 10.6Z" fill="#7691ab"/></svg>
<svg class="b" style="left:22.5px;top:1166.5px;" width="21" height="16" viewBox="0 0 21 16"><path d="M1 13.500 V2.500 Q1 1 2.500 1 H7 L9 3.500 H15.500 Q17 3.500 17 5 V6.500" fill="none" stroke="#e6e6e6" stroke-width="1.600"/><path d="M1.500 15 L5 7 H20.500 L17 15Z" fill="#e6e6e6"/></svg>
<div class="t" style="left:48.2px;top:1163px;font-size:18px;line-height:20px;color:#ffffff;transform:scaleX(0.8783);font-weight:bold;">Ressourcen</div>
<svg class="b" style="left:23.3px;top:1193.5px;" width="12" height="10.5" viewBox="0 0 12 10.5"><path d="M0 0 H12 L6 10.5Z" fill="#7a7a7a"/></svg>
<svg class="b" style="left:43.8px;top:1190.5px;" width="21" height="16" viewBox="0 0 21 16"><path d="M1 13.500 V2.500 Q1 1 2.500 1 H7 L9 3.500 H15.500 Q17 3.500 17 5 V6.500" fill="none" stroke="#c4c4c4" stroke-width="1.600"/><path d="M1.500 15 L5 7 H20.500 L17 15Z" fill="#c4c4c4"/></svg>
<div class="t" style="left:69.3px;top:1187px;font-size:18px;line-height:20px;color:#d2d2d2;">AzureSpatialAnchors.SDK</div>
<svg class="b" style="left:63.8px;top:1214.3px;" width="19" height="16" viewBox="0 0 19 16"><path d="M1 2.500 Q1 1 2.500 1 H7 L9 3.500 H16.500 Q18 3.500 18 5 V13.500 Q18 15 16.500 15 H2.500 Q1 15 1 13.500Z" fill="#c4c4c4"/></svg>
<div class="t" style="left:89.9px;top:1211px;font-size:18px;line-height:20px;color:#d2d2d2;">Plugins</div>
<svg class="b" style="left:24.8px;top:1240.5px;" width="10.5" height="12" viewBox="0 0 10.5 12"><path d="M0 0 V12 L10.5 6Z" fill="#6a6a6a"/></svg>
<svg class="b" style="left:42.5px;top:1238.3px;" width="19" height="16" viewBox="0 0 19 16"><path d="M1 2.500 Q1 1 2.500 1 H7 L9 3.500 H16.500 Q18 3.500 18 5 V13.500 Q18 15 16.500 15 H2.500 Q1 15 1 13.500Z" fill="#c4c4c4"/></svg>
<div class="t" style="left:69.3px;top:1235px;font-size:18px;line-height:20px;color:#d2d2d2;">AzureSpatialAnchors</div>
<svg class="b" style="left:42.5px;top:1262.3px;" width="19" height="16" viewBox="0 0 19 16"><path d="M1 2.500 Q1 1 2.500 1 H7 L9 3.500 H16.500 Q18 3.500 18 5 V13.500 Q18 15 16.500 15 H2.500 Q1 15 1 13.500Z" fill="#c4c4c4"/></svg>
<div class="t" style="left:69.3px;top:1259px;font-size:18px;line-height:20px;color:#d2d2d2;">Materials</div>
<svg class="b" style="left:23.3px;top:1289.5px;" width="12" height="10.5" viewBox="0 0 12 10.5"><path d="M0 0 H12 L6 10.5Z" fill="#7a7a7a"/></svg>
<svg class="b" style="left:43.8px;top:1286.5px;" width="21" height="16" viewBox="0 0 21 16"><path d="M1 13.500 V2.500 Q1 1 2.500 1 H7 L9 3.500 H15.500 Q17 3.500 17 5 V6.500" fill="none" stroke="#c4c4c4" stroke-width="1.600"/><path d="M1.500 15 L5 7 H20.500 L17 15Z" fill="#c4c4c4"/></svg>
<div class="t" style="left:69.3px;top:1283px;font-size:18px;line-height:20px;color:#d2d2d2;">Microsoft.SpatialAudio</div>
<svg class="b" style="left:46.1px;top:1312.5px;" width="10.5" height="12" viewBox="0 0 10.5 12"><path d="M0 0 V12 L10.5 6Z" fill="#6a6a6a"/></svg>
<svg class="b" style="left:63.8px;top:1310.3px;" width="19" height="16" viewBox="0 0 19 16"><path d="M1 2.500 Q1 1 2.500 1 H7 L9 3.500 H16.500 Q18 3.500 18 5 V13.500 Q18 15 16.500 15 H2.500 Q1 15 1 13.500Z" fill="#c4c4c4"/></svg>
<div class="t" style="left:89.9px;top:1307px;font-size:18px;line-height:20px;color:#d2d2d2;">Plugins</div>
<svg class="b" style="left:46.1px;top:1336.5px;" width="10.5" height="12" viewBox="0 0 10.5 12"><path d="M0 0 V12 L10.5 6Z" fill="#6a6a6a"/></svg>
<svg class="b" style="left:63.8px;top:1334.3px;" width="19" height="16" viewBox="0 0 19 16"><path d="M1 2.500 Q1 1 2.500 1 H7 L9 3.500 H16.500 Q18 3.500 18 5 V13.500 Q18 15 16.500 15 H2.500 Q1 15 1 13.500Z" fill="#c4c4c4"/></svg>
<div class="t" style="left:89.9px;top:1331px;font-size:18px;line-height:20px;color:#d2d2d2;">Skripts</div>
<svg class="b" style="left:42.5px;top:1358.3px;" width="19" height="16" viewBox="0 0 19 16"><path d="M1 2.500 Q1 1 2.500 1 H7 L9 3.500 H16.500 Q18 3.500 18 5 V13.500 Q18 15 16.500 15 H2.500 Q1 15 1 13.500Z" fill="#c4c4c4"/></svg>
<div class="t" style="left:69.3px;top:1355px;font-size:18px;line-height:20px;color:#d2d2d2;">MixedRealityToolkit</div>
<svg class="b" style="left:23.3px;top:1385.5px;" width="12" height="10.5" viewBox="0 0 12 10.5"><path d="M0 0 H12 L6 10.5Z" fill="#7a7a7a"/></svg>
<svg class="b" style="left:43.8px;top:1382.5px;" width="21" height="16" viewBox="0 0 21 16"><path d="M1 13.500 V2.500 Q1 1 2.500 1 H7 L9 3.500 H15.500 Q17 3.500 17 5 V6.500" fill="none" stroke="#c4c4c4" stroke-width="1.600"/><path d="M1.500 15 L5 7 H20.500 L17 15Z" fill="#c4c4c4"/></svg>
<div class="t" style="left:69.3px;top:1379px;font-size:18px;line-height:20px;color:#d2d2d2;">MRTK</div>
<svg class="b" style="left:63.8px;top:1406.3px;" width="19" height="16" viewBox="0 0 19 16"><path d="M1 2.500 Q1 1 2.500 1 H7 L9 3.500 H16.500 Q18 3.500 18 5 V13.500 Q18 15 16.500 15 H2.500 Q1 15 1 13.500Z" fill="#c4c4c4"/></svg>
<div class="t" style="left:89.9px;top:1403px;font-size:18px;line-height:20px;color:#d2d2d2;">Skripts</div>
<svg class="b" style="left:42.5px;top:1430.3px;" width="19" height="16" viewBox="0 0 19 16"><path d="M1 2.500 Q1 1 2.500 1 H7 L9 3.500 H16.500 Q18 3.500 18 5 V13.500 Q18 15 16.500 15 H2.500 Q1 15 1 13.500Z" fill="#c4c4c4"/></svg>
<div class="t" style="left:69.3px;top:1427px;font-size:18px;line-height:20px;color:#d2d2d2;">MRTK.Generated</div>
<svg class="b" style="left:23.3px;top:1457.5px;" width="12" height="10.5" viewBox="0 0 12 10.5"><path d="M0 0 H12 L6 10.5Z" fill="#7a7a7a"/></svg>
<svg class="b" style="left:43.8px;top:1454.5px;" width="21" height="16" viewBox="0 0 21 16"><path d="M1 13.500 V2.500 Q1 1 2.500 1 H7 L9 3.500 H15.500 Q17 3.500 17 5 V6.500" fill="none" stroke="#c4c4c4" stroke-width="1.600"/><path d="M1.500 15 L5 7 H20.500 L17 15Z" fill="#c4c4c4"/></svg>
<div class="t" style="left:69.3px;top:1451px;font-size:18px;line-height:20px;color:#d2d2d2;">MRTK.Tutorials</div>
<svg class="b" style="left:63.8px;top:1478.3px;" width="19" height="16" viewBox="0 0 19 16"><path d="M1 2.500 Q1 1 2.500 1 H7 L9 3.500 H16.500 Q18 3.500 18 5 V13.500 Q18 15 16.500 15 H2.500 Q1 15 1 13.500Z" fill="#c4c4c4"/></svg>
<div class="t" style="left:89.9px;top:1475px;font-size:18px;line-height:20px;color:#d2d2d2;">Materials</div>
<svg class="b" style="left:46.1px;top:1504.5px;" width="10.5" height="12" viewBox="0 0 10.5 12"><path d="M0 0 V12 L10.5 6Z" fill="#6a6a6a"/></svg>
<svg class="b" style="left:63.8px;top:1502.3px;" width="19" height="16" viewBox="0 0 19 16"><path d="M1 2.500 Q1 1 2.500 1 H7 L9 3.500 H16.500 Q18 3.500 18 5 V13.500 Q18 15 16.500 15 H2.500 Q1 15 1 13.500Z" fill="#c4c4c4"/></svg>
<div class="t" style="left:89.9px;top:1499px;font-size:18px;line-height:20px;color:#d2d2d2;">Mixed</div>
<svg class="b" style="left:44.6px;top:1529.5px;" width="12" height="10.5" viewBox="0 0 12 10.5"><path d="M0 0 H12 L6 10.5Z" fill="#7a7a7a"/></svg>
<svg class="b" style="left:65.1px;top:1526.5px;" width="21" height="16" viewBox="0 0 21 16"><path d="M1 13.500 V2.500 Q1 1 2.500 1 H7 L9 3.500 H15.500 Q17 3.500 17 5 V6.500" fill="none" stroke="#c4c4c4" stroke-width="1.600"/><path d="M1.500 15 L5 7 H20.500 L17 15Z" fill="#c4c4c4"/></svg>
<div class="t" style="left:89.9px;top:1523px;font-size:18px;line-height:20px;color:#d2d2d2;">Prefabs</div>
<svg class="b" style="left:85.1px;top:1550.3px;" width="19" height="16" viewBox="0 0 19 16"><path d="M1 2.500 Q1 1 2.500 1 H7 L9 3.500 H16.500 Q18 3.500 18 5 V13.500 Q18 15 16.500 15 H2.500 Q1 15 1 13.500Z" fill="#c4c4c4"/></svg>
<svg class="b" style="left:85.1px;top:1574.3px;" width="19" height="16" viewBox="0 0 19 16"><path d="M1 2.500 Q1 1 2.500 1 H7 L9 3.500 H16.500 Q18 3.500 18 5 V13.500 Q18 15 16.500 15 H2.500 Q1 15 1 13.500Z" fill="#c4c4c4"/></svg>
<div class="b" style="left:447px;top:1043.5px;width:19px;height:510px;background:#353535;"></div>
<svg class="b" style="left:451px;top:1052.5px;" width="11" height="7" viewBox="0 0 11 7"><path d="M0 7 H11 L5.500 0Z" fill="#c4c4c4"/></svg>
<div class="b" style="left:450px;top:1067.5px;width:14px;height:332.5px;background:#5f5f5f;border-radius:7px;"></div>
<div class="b" style="left:465.5px;top:1043.5px;width:1px;height:510px;background:#232323;"></div>
<div class="b" style="left:466.5px;top:1043.5px;width:1250.5px;height:31.5px;background:#424242;"></div>
<div class="t" style="left:474.5px;top:1049px;font-size:18px;line-height:20px;color:#d2d2d2;transform:scaleX(0.9219);font-weight:bold;">Ressourcen</div>
<div class="b" style="left:466.5px;top:1075px;width:1250.5px;height:476.5px;background:#333333;"></div>
<svg class="b" style="left:493.3px;top:1079.6px;" width="19" height="16" viewBox="0 0 19 16"><path d="M1 2.500 Q1 1 2.500 1 H7 L9 3.500 H16.500 Q18 3.500 18 5 V13.500 Q18 15 16.500 15 H2.500 Q1 15 1 13.500Z" fill="#c4c4c4"/></svg>
<div class="t" style="left:519.0px;top:1077px;font-size:18px;line-height:20px;color:#d2d2d2;">AzureSpatialAnchors.SDK</div>
<svg class="b" style="left:493.3px;top:1103.6px;" width="19" height="16" viewBox="0 0 19 16"><path d="M1 2.500 Q1 1 2.500 1 H7 L9 3.500 H16.500 Q18 3.500 18 5 V13.500 Q18 15 16.500 15 H2.500 Q1 15 1 13.500Z" fill="#c4c4c4"/></svg>
<div class="t" style="left:519.0px;top:1101px;font-size:18px;line-height:20px;color:#d2d2d2;">AzureSpatialAnchors.Examples</div>
<svg class="b" style="left:493.3px;top:1127.8px;" width="19" height="16" viewBox="0 0 19 16"><path d="M1 2.500 Q1 1 2.500 1 H7 L9 3.500 H16.500 Q18 3.500 18 5 V13.500 Q18 15 16.500 15 H2.500 Q1 15 1 13.500Z" fill="#c4c4c4"/></svg>
<div class="t" style="left:519.0px;top:1125px;font-size:18px;line-height:20px;color:#d2d2d2;">Materials</div>
<svg class="b" style="left:493.3px;top:1152.6px;" width="19" height="16" viewBox="0 0 19 16"><path d="M1 2.500 Q1 1 2.500 1 H7 L9 3.500 H16.500 Q18 3.500 18 5 V13.500 Q18 15 16.500 15 H2.500 Q1 15 1 13.500Z" fill="#c4c4c4"/></svg>
<div class="t" style="left:519.0px;top:1150px;font-size:18px;line-height:20px;color:#d2d2d2;">Microsoft.SpatialAudio</div>
<div class="t" style="left:542.5px;top:1535px;font-size:17px;line-height:19px;color:#c4c4c4;transform:scaleX(1.0971);">Microsoft HoloLens - Spatial Sound-PTPvx7mDon4</div>
<div class="b" style="left:1697.5px;top:1075px;width:19.5px;height:476px;background:#353535;"></div>
<svg class="b" style="left:1701.5px;top:1083.5px;" width="11" height="7" viewBox="0 0 11 7"><path d="M0 7 H11 L5.500 0Z" fill="#c4c4c4"/></svg>
<svg class="b" style="left:1701.5px;top:1536px;" width="11" height="7" viewBox="0 0 11 7"><path d="M0 0 H11 L5.500 7Z" fill="#c4c4c4"/></svg>
<div class="b" style="left:1700px;top:1100px;width:14.5px;height:388px;background:#5f5f5f;border-radius:7px;"></div>
<div class="b" style="left:466.5px;top:1551px;width:1250.5px;height:31px;background:#424242;"></div>
<div class="b" style="left:466.5px;top:1550.9px;width:1250.5px;height:2.3px;background:#2b2b2b;"></div>
<div class="b" style="left:1620px;top:1564.8px;width:72px;height:3px;background:#5e5e5e;border-radius:1.5px;"></div>
<div class="b" style="left:1610px;top:1558.8px;width:15px;height:15px;background:#999;border-radius:50%;"></div>
<div class="b" style="left:0px;top:1582px;width:2556px;height:30px;background:#191919;"></div>
<svg class="b" style="left:0px;top:1588px;" width="22" height="23" viewBox="0 0 22 23"><circle cx="10.400" cy="10.300" r="9.900" fill="#f0f0f0"/><path d="M12.500 18.500 L19 21.800 L17.500 15Z" fill="#f0f0f0"/><path d="M9 4.300 H11.900 L11.300 12.800 H9.600Z" fill="#191919"/><circle cx="10.450" cy="15.600" r="1.500" fill="#191919"/></svg>
<div class="t" style="left:26.5px;top:1589px;font-size:18px;line-height:20px;color:#f0f0f0;transform:scaleX(0.8723);">Erstes Videobild</div>
<div class="t" style="left:822.1px;top:1589px;font-size:18px;line-height:20px;color:#c8c8c8;transform:scaleX(1.0844);">Videostart at 0 in C:/UPRN23/MRTK Tutorial/Assets/Microsoft HoloLens - Spatial Sound-PTPvx7mDon4.mp4</div>
<div class="b" style="left:2402.3px;top:1585px;width:1.5px;height:27px;background:#262626;"></div>
<div class="b" style="left:2441.3px;top:1585px;width:1.5px;height:27px;background:#262626;"></div>
<div class="b" style="left:2480.3px;top:1585px;width:1.5px;height:27px;background:#262626;"></div>
<div class="b" style="left:2519.7px;top:1585px;width:1.5px;height:27px;background:#262626;"></div>
<svg class="b" style="left:2409.5px;top:1588.5px;" width="22" height="23" viewBox="0 0 22 23"><g fill="#ffc107"><ellipse cx="9.500" cy="13" rx="5.300" ry="8"/><circle cx="9.500" cy="4.800" r="3.200"/><path d="M0.800 21.500 L5 16.500 L6.500 18 L3 22.300Z M1 12.500 L5.500 11.500 L5.800 13.800 L1.300 14.500Z M2.300 4.500 L3.800 3.300 L6.800 8.500 L5 9.500Z M18.700 4.500 L17.200 3.300 L14.200 8.500 L16 9.500Z M6 1.800 L7.300 0.800 L8.800 3 L7.500 3.800Z M13 1.800 L11.700 0.800 L10.200 3 L11.500 3.800Z"/></g><path d="M16.500 10.500 V22.500" stroke="#191919" stroke-width="6"/><rect x="14.800" y="11.500" width="3.400" height="6.800" fill="#ffc107"/><rect x="14.800" y="19.300" width="3.400" height="2.800" fill="#ffc107"/></svg>
<svg class="b" style="left:2449.5px;top:1588.5px;" width="23" height="23" viewBox="0 0 23 23"><ellipse cx="10.500" cy="5.500" rx="8.700" ry="4.300" fill="#c4c4c4"/><path d="M1.800 8.500 C3 12.500 18 12.500 19.200 8.500 V12 C18 16 3 16 1.800 12Z M1.800 14.500 C3 18.500 18 18.500 19.200 14.500 V17.500 C18 21.800 3 21.800 1.800 17.500Z" fill="#c4c4c4"/><path d="M0.500 1.500 L21.500 22.500" stroke="#191919" stroke-width="4"/><path d="M1 0.500 L22 21.800" stroke="#c4c4c4" stroke-width="1.700"/></svg>
<svg class="b" style="left:2488px;top:1588.5px;" width="23" height="23" viewBox="0 0 23 23"><g fill="none" stroke="#c4c4c4" stroke-width="1.700"><path d="M2.800 8 A9.300 9.300 0 0 1 18.500 4.500"/><path d="M20.200 15 A9.300 9.300 0 0 1 4.500 18.500"/></g><path d="M20.500 1 L20 6.800 L15 4Z M2.500 22 L3 16.200 L8 19Z" fill="#c4c4c4"/><circle cx="11.500" cy="9.800" r="4.600" fill="#c4c4c4"/><rect x="9" y="14.500" width="5" height="3.600" rx="1.500" fill="#c4c4c4"/><path d="M1.500 1.500 L21.500 22" stroke="#191919" stroke-width="4"/><path d="M2 0.800 L22 21.300" stroke="#c4c4c4" stroke-width="1.700"/></svg>
<svg class="b" style="left:2527px;top:1589px;" width="23" height="22" viewBox="0 0 23 22"><circle cx="11.300" cy="11" r="9.600" fill="none" stroke="#c4c4c4" stroke-width="1.600"/><path d="M6.500 11 L10 14.500 L16 8" fill="none" stroke="#c4c4c4" stroke-width="2"/></svg>
<div class="b" style="left:109px;top:1174.3px;width:438.5px;height:440px;background:#f2f2f2;border:1px solid #f7f7f7;box-sizing:border-box;box-shadow:3px 3px 4px rgba(0,0,0,0.5);"></div>
<div class="b" style="left:112px;top:1177.5px;width:435px;height:30.2px;background:#91c9f7;"></div>
<svg class="b" style="left:532.5px;top:1186.5px;" width="8" height="13" viewBox="0 0 8 13"><path d="M1.300 1.600 L6.900 6.500 L1.300 11.400" fill="none" stroke="#222" stroke-width="1.250"/></svg>
<div class="t" style="left:152.0px;top:1184px;font-size:18px;line-height:20px;color:#000;transform:scaleX(0.9424);">Erstellen</div>
<div class="t" style="left:153.4px;top:1215px;font-size:18px;line-height:20px;color:#000;transform:scaleX(0.9701);">Im Explorer anzeigen</div>
<div class="t" style="left:154.0px;top:1246px;font-size:18px;line-height:20px;color:#000;">Öffnen</div>
<div class="t" style="left:154.0px;top:1277px;font-size:18px;line-height:20px;color:#6d6d6d;transform:scaleX(0.9744);">Delete</div>
<div class="t" style="left:153.4px;top:1308px;font-size:18px;line-height:20px;color:#6d6d6d;transform:scaleX(0.9201);">Rename</div>
<div class="t" style="left:154.0px;top:1339px;font-size:18px;line-height:20px;color:#000;transform:scaleX(0.9813);">Pfad kopieren</div>
<div class="t" style="left:153.4px;top:1377px;font-size:18px;line-height:20px;color:#6d6d6d;transform:scaleX(0.9814);">Open Scene Additive</div>
<div class="t" style="left:153.4px;top:1415px;font-size:18px;line-height:20px;color:#6d6d6d;transform:scaleX(0.9684);">View in Package Manager</div>
<div class="t" style="left:153.4px;top:1453px;font-size:18px;line-height:20px;color:#000;transform:scaleX(0.9753);">Import New Asset...</div>
<div class="t" style="left:154.0px;top:1484px;font-size:18px;line-height:20px;color:#000;transform:scaleX(0.9757);">Import Package</div>
<div class="t" style="left:155.5px;top:1515px;font-size:18px;line-height:20px;color:#000;transform:scaleX(0.9578);">Paket exportieren...</div>
<div class="t" style="left:154.0px;top:1546px;font-size:18px;line-height:20px;color:#6d6d6d;transform:scaleX(0.9473);">Verweise in Szene suchen</div>
<div class="t" style="left:153.4px;top:1577px;font-size:18px;line-height:20px;color:#000;transform:scaleX(0.9880);">Abhängigkeiten auswählen</div>
<div class="t" style="left:444.0px;top:1339px;font-size:18px;line-height:20px;color:#000;transform:scaleX(0.9426);">Alt+STRG+C</div>
<svg class="b" style="left:532.5px;top:1487.5px;" width="8" height="13" viewBox="0 0 8 13"><path d="M1.300 1.600 L6.900 6.500 L1.300 11.400" fill="none" stroke="#222" stroke-width="1.250"/></svg>
<div class="b" style="left:148.8px;top:1365.9px;width:398px;height:1.3px;background:#d7d7d7;"></div>
<div class="b" style="left:148.8px;top:1403.9px;width:398px;height:1.3px;background:#d7d7d7;"></div>
<div class="b" style="left:148.8px;top:1441.9px;width:398px;height:1.3px;background:#d7d7d7;"></div>
<div class="b" style="left:148.8px;top:1603.9px;width:398px;height:1.3px;background:#d7d7d7;"></div>
<div class="b" style="left:547px;top:568px;width:350px;height:1050px;background:#f2f2f2;border:1px solid #f7f7f7;box-sizing:border-box;box-shadow:3px 3px 4px rgba(0,0,0,0.5);"></div>
<div class="b" style="left:550px;top:771px;width:344px;height:31px;background:#91c9f7;"></div>
<div class="t" style="left:590.5px;top:578px;font-size:18px;line-height:20px;color:#000;transform:scaleX(0.9822);">Grafiktools</div>
<svg class="b" style="left:876px;top:580.5px;" width="8" height="13" viewBox="0 0 8 13"><path d="M1.300 1.600 L6.900 6.500 L1.300 11.400" fill="none" stroke="#222" stroke-width="1.250"/></svg>
<div class="t" style="left:591.0px;top:609px;font-size:18px;line-height:20px;color:#000;transform:scaleX(0.8881);">MRTK</div>
<svg class="b" style="left:876px;top:611.5px;" width="8" height="13" viewBox="0 0 8 13"><path d="M1.300 1.600 L6.900 6.500 L1.300 11.400" fill="none" stroke="#222" stroke-width="1.250"/></svg>
<div class="t" style="left:591.0px;top:640px;font-size:18px;line-height:20px;color:#000;transform:scaleX(0.8318);">XR</div>
<svg class="b" style="left:876px;top:642.5px;" width="8" height="13" viewBox="0 0 8 13"><path d="M1.300 1.600 L6.900 6.500 L1.300 11.400" fill="none" stroke="#222" stroke-width="1.250"/></svg>
<div class="t" style="left:592.0px;top:671px;font-size:18px;line-height:20px;color:#000;transform:scaleX(0.9751);">Azure Spatial Anchors</div>
<svg class="b" style="left:876px;top:673.5px;" width="8" height="13" viewBox="0 0 8 13"><path d="M1.300 1.600 L6.900 6.500 L1.300 11.400" fill="none" stroke="#222" stroke-width="1.250"/></svg>
<div class="t" style="left:591.0px;top:702px;font-size:18px;line-height:20px;color:#000;transform:scaleX(1.0057);">Mixed-Reality-Toolkit</div>
<svg class="b" style="left:876px;top:704.5px;" width="8" height="13" viewBox="0 0 8 13"><path d="M1.300 1.600 L6.900 6.500 L1.300 11.400" fill="none" stroke="#222" stroke-width="1.250"/></svg>
<div class="t" style="left:591.0px;top:740px;font-size:18px;line-height:20px;color:#000;transform:scaleX(0.9604);">Folder</div>
<div class="t" style="left:590.5px;top:778px;font-size:18px;line-height:20px;color:#000;transform:scaleX(0.9798);">C#-Skript</div>
<div class="t" style="left:591.6px;top:809px;font-size:18px;line-height:20px;color:#000;transform:scaleX(0.9517);">2D</div>
<svg class="b" style="left:876px;top:811.5px;" width="8" height="13" viewBox="0 0 8 13"><path d="M1.300 1.600 L6.900 6.500 L1.300 11.400" fill="none" stroke="#222" stroke-width="1.250"/></svg>
<div class="t" style="left:591.0px;top:840px;font-size:18px;line-height:20px;color:#000;transform:scaleX(0.9855);">Visuelle Skripterstellung</div>
<svg class="b" style="left:876px;top:842.5px;" width="8" height="13" viewBox="0 0 8 13"><path d="M1.300 1.600 L6.900 6.500 L1.300 11.400" fill="none" stroke="#222" stroke-width="1.250"/></svg>
<div class="t" style="left:591.6px;top:871px;font-size:18px;line-height:20px;color:#000;transform:scaleX(0.9475);">Shader</div>
<svg class="b" style="left:876px;top:873.5px;" width="8" height="13" viewBox="0 0 8 13"><path d="M1.300 1.600 L6.900 6.500 L1.300 11.400" fill="none" stroke="#222" stroke-width="1.250"/></svg>
<div class="t" style="left:591.0px;top:902px;font-size:18px;line-height:20px;color:#000;transform:scaleX(0.9794);">Shadervariantensammlung</div>
<div class="t" style="left:591.0px;top:933px;font-size:18px;line-height:20px;color:#000;transform:scaleX(0.9334);">Testen</div>
<svg class="b" style="left:876px;top:935.5px;" width="8" height="13" viewBox="0 0 8 13"><path d="M1.300 1.600 L6.900 6.500 L1.300 11.400" fill="none" stroke="#222" stroke-width="1.250"/></svg>
<div class="t" style="left:591.0px;top:964px;font-size:18px;line-height:20px;color:#000;transform:scaleX(0.9839);">Wiedergabefähige Elemente</div>
<svg class="b" style="left:876px;top:966.5px;" width="8" height="13" viewBox="0 0 8 13"><path d="M1.300 1.600 L6.900 6.500 L1.300 11.400" fill="none" stroke="#222" stroke-width="1.250"/></svg>
<div class="t" style="left:591.0px;top:995px;font-size:18px;line-height:20px;color:#000;">Assemblydefinition</div>
<div class="t" style="left:591.0px;top:1026px;font-size:18px;line-height:20px;color:#000;transform:scaleX(0.9855);">Assemblydefinitionsverweis</div>
<div class="t" style="left:591.0px;top:1057px;font-size:18px;line-height:20px;color:#000;transform:scaleX(0.9784);">Mixed Reality</div>
<svg class="b" style="left:876px;top:1059.5px;" width="8" height="13" viewBox="0 0 8 13"><path d="M1.300 1.600 L6.900 6.500 L1.300 11.400" fill="none" stroke="#222" stroke-width="1.250"/></svg>
<div class="t" style="left:590.5px;top:1088px;font-size:18px;line-height:20px;color:#000;transform:scaleX(0.9179);">Text</div>
<svg class="b" style="left:876px;top:1090.5px;" width="8" height="13" viewBox="0 0 8 13"><path d="M1.300 1.600 L6.900 6.500 L1.300 11.400" fill="none" stroke="#222" stroke-width="1.250"/></svg>
<div class="t" style="left:591.0px;top:1119px;font-size:18px;line-height:20px;color:#000;transform:scaleX(0.9615);">TextMeshPro</div>
<svg class="b" style="left:876px;top:1121.5px;" width="8" height="13" viewBox="0 0 8 13"><path d="M1.300 1.600 L6.900 6.500 L1.300 11.400" fill="none" stroke="#222" stroke-width="1.250"/></svg>
<div class="t" style="left:592.0px;top:1157px;font-size:18px;line-height:20px;color:#000;transform:scaleX(0.8817);">Szene</div>
<div class="t" style="left:591.0px;top:1188px;font-size:18px;line-height:20px;color:#000;transform:scaleX(0.9526);">Szenenvorlage</div>
<div class="t" style="left:591.0px;top:1219px;font-size:18px;line-height:20px;color:#8a8a8a;transform:scaleX(0.9393);">Szenenvorlage aus Szene</div>
<div class="t" style="left:592.0px;top:1250px;font-size:18px;line-height:20px;color:#000;transform:scaleX(0.9745);">Szenenvorlagepipeline</div>
<div class="t" style="left:591.5px;top:1281px;font-size:18px;line-height:20px;color:#000;transform:scaleX(0.9333);">Prefab</div>
<div class="t" style="left:591.5px;top:1312px;font-size:18px;line-height:20px;color:#8a8a8a;transform:scaleX(0.9661);">Prefabvariante</div>
<div class="t" style="left:592.4px;top:1350px;font-size:18px;line-height:20px;color:#000;transform:scaleX(1.0205);">Audio-Mixer</div>
<div class="t" style="left:591.5px;top:1388px;font-size:18px;line-height:20px;color:#000;transform:scaleX(0.9918);">Material</div>
<div class="t" style="left:591.5px;top:1419px;font-size:18px;line-height:20px;color:#000;transform:scaleX(0.9077);">Lens Flare</div>
<div class="t" style="left:591.5px;top:1450px;font-size:18px;line-height:20px;color:#000;transform:scaleX(0.9548);">Render Texture</div>
<div class="t" style="left:591.5px;top:1481px;font-size:18px;line-height:20px;color:#000;transform:scaleX(0.9873);">Lightmap-Parameter</div>
<div class="t" style="left:591.5px;top:1512px;font-size:18px;line-height:20px;color:#000;transform:scaleX(0.9853);">Beleuchtungseinstellungen</div>
<div class="t" style="left:591.5px;top:1543px;font-size:18px;line-height:20px;color:#000;transform:scaleX(0.9888);">Benutzerdefinierte Rendertextur</div>
<div class="t" style="left:592.4px;top:1581px;font-size:18px;line-height:20px;color:#000;transform:scaleX(1.0194);">Animatorcontroller</div>
<div class="b" style="left:587px;top:728.9px;width:307px;height:1.3px;background:#d7d7d7;"></div>
<div class="b" style="left:587px;top:766.9px;width:307px;height:1.3px;background:#d7d7d7;"></div>
<div class="b" style="left:587px;top:1145.9px;width:307px;height:1.3px;background:#d7d7d7;"></div>
<div class="b" style="left:587px;top:1338.9px;width:307px;height:1.3px;background:#d7d7d7;"></div>
<div class="b" style="left:587px;top:1376.9px;width:307px;height:1.3px;background:#d7d7d7;"></div>
<div class="b" style="left:587px;top:1569.9px;width:307px;height:1.3px;background:#d7d7d7;"></div>
<svg class="b" style="left:691.5px;top:787.5px;" width="21" height="29" viewBox="0 0 21 29"><path d="M0.900 0.900 V24.200 L6.100 19.800 L9.500 27.200 L14.400 25.100 L11.500 19 L18.600 18.700Z" fill="#fff" stroke="#0a0a14" stroke-width="1.200" stroke-linejoin="round"/></svg>
</body></html>
